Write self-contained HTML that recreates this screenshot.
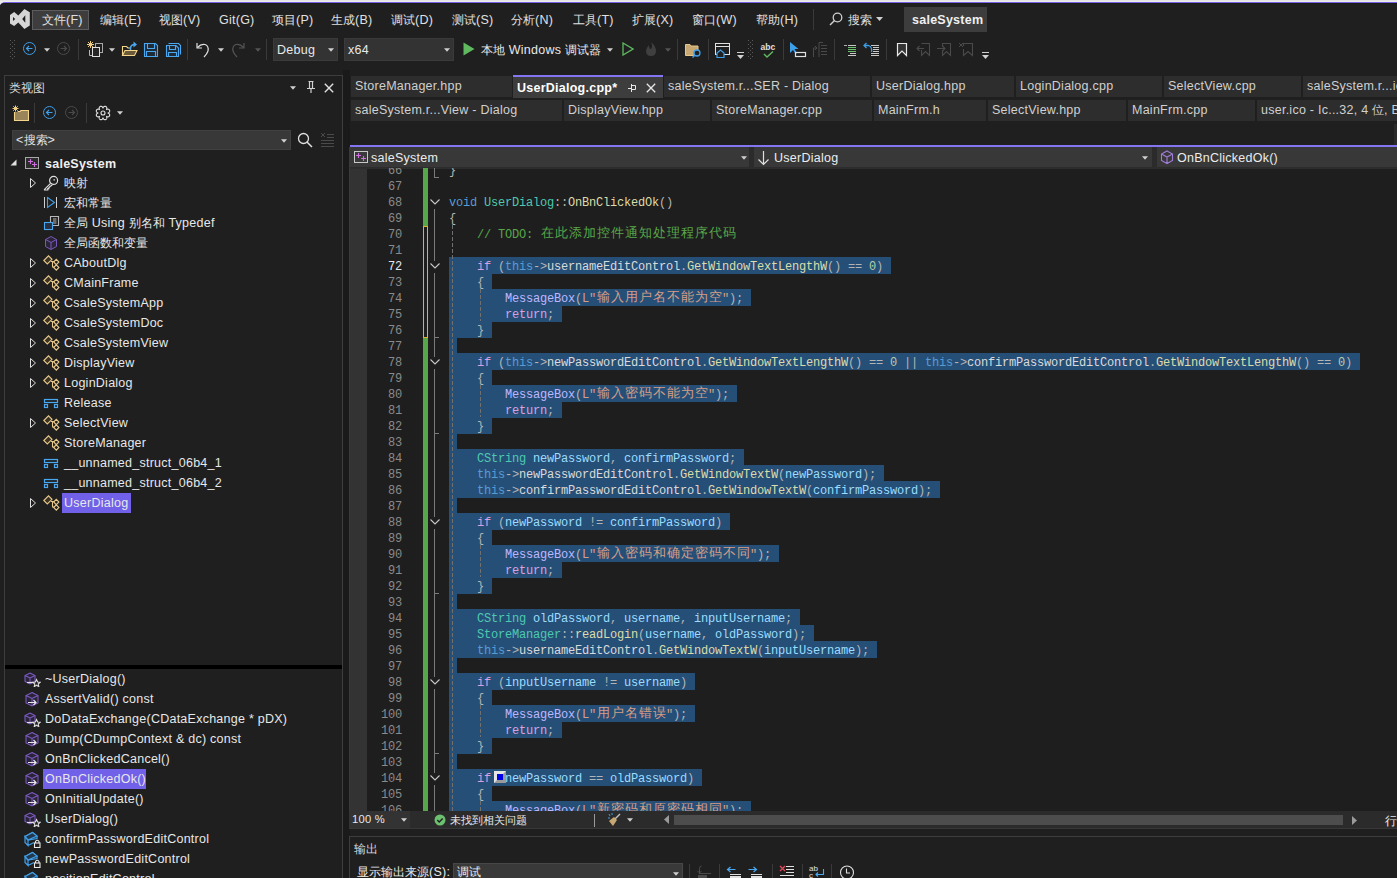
<!DOCTYPE html><html><head><meta charset="utf-8"><style>
*{margin:0;padding:0}
html,body{width:1397px;height:878px;overflow:hidden;background:#e9e9ec}
.r{position:absolute;display:block}
.t{position:absolute;white-space:pre;line-height:1;letter-spacing:0.25px}
.code{position:absolute;white-space:pre;font-family:"Liberation Mono",monospace;font-size:12px;letter-spacing:-0.2px;line-height:20px;height:20px}
.cjk{position:absolute;white-space:pre;font-family:"Liberation Sans",sans-serif;font-size:12.5px;line-height:16px;height:16px;width:14px;text-align:center}
</style></head><body><div class="r" style="left:0px;top:0px;width:1397px;height:3px;background:#ececea;"></div>
<div class="r" style="left:0px;top:0px;width:1397px;height:1px;background:#e6e6e6;"></div>
<div class="r" style="left:0px;top:2px;width:1397px;height:876px;background:#7462e6;border-top-left-radius:5px;"></div>
<div class="r" style="left:0px;top:3px;width:1397px;height:875px;background:#1c1b15;border-top-left-radius:4px;"></div>
<div class="r" style="left:0px;top:4px;width:1397px;height:874px;background:#1f1f1f;border-top-left-radius:3px;"></div>
<svg class="r" style="left:10px;top:9px;" width="20" height="20" viewBox="0 0 20 20"><path d="M0 6 L4.2 3 L8.3 6.5 L14.4 0 L19.8 3.3 V16.5 L14.4 20 L8.3 13.5 L4.2 17 L0 14.5 Z M3 8 L5.2 10 L3 12 Z M15.3 6.3 L12.2 10 L15.3 13.7 Z" fill="#d6d6d6" fill-rule="evenodd"/></svg>
<div class="r" style="left:32px;top:10px;width:57px;height:20px;background:#3d3d3d;box-sizing:border-box;border:1px solid #5c5c5c;"></div>
<div class="t" style="left:42px;top:14px;color:#e0e0e0;font-size:12.5px;font-weight:normal;font-family:'Liberation Sans', sans-serif;"><span style="font-size:12px;letter-spacing:0">文件</span>(F)</div>
<div class="t" style="left:100px;top:14px;color:#e0e0e0;font-size:12.5px;font-weight:normal;font-family:'Liberation Sans', sans-serif;"><span style="font-size:12px;letter-spacing:0">编辑</span>(E)</div>
<div class="t" style="left:159px;top:14px;color:#e0e0e0;font-size:12.5px;font-weight:normal;font-family:'Liberation Sans', sans-serif;"><span style="font-size:12px;letter-spacing:0">视图</span>(V)</div>
<div class="t" style="left:219px;top:14px;color:#e0e0e0;font-size:12.5px;font-weight:normal;font-family:'Liberation Sans', sans-serif;">Git(G)</div>
<div class="t" style="left:272px;top:14px;color:#e0e0e0;font-size:12.5px;font-weight:normal;font-family:'Liberation Sans', sans-serif;"><span style="font-size:12px;letter-spacing:0">项目</span>(P)</div>
<div class="t" style="left:331px;top:14px;color:#e0e0e0;font-size:12.5px;font-weight:normal;font-family:'Liberation Sans', sans-serif;"><span style="font-size:12px;letter-spacing:0">生成</span>(B)</div>
<div class="t" style="left:391px;top:14px;color:#e0e0e0;font-size:12.5px;font-weight:normal;font-family:'Liberation Sans', sans-serif;"><span style="font-size:12px;letter-spacing:0">调试</span>(D)</div>
<div class="t" style="left:452px;top:14px;color:#e0e0e0;font-size:12.5px;font-weight:normal;font-family:'Liberation Sans', sans-serif;"><span style="font-size:12px;letter-spacing:0">测试</span>(S)</div>
<div class="t" style="left:511px;top:14px;color:#e0e0e0;font-size:12.5px;font-weight:normal;font-family:'Liberation Sans', sans-serif;"><span style="font-size:12px;letter-spacing:0">分析</span>(N)</div>
<div class="t" style="left:573px;top:14px;color:#e0e0e0;font-size:12.5px;font-weight:normal;font-family:'Liberation Sans', sans-serif;"><span style="font-size:12px;letter-spacing:0">工具</span>(T)</div>
<div class="t" style="left:632px;top:14px;color:#e0e0e0;font-size:12.5px;font-weight:normal;font-family:'Liberation Sans', sans-serif;"><span style="font-size:12px;letter-spacing:0">扩展</span>(X)</div>
<div class="t" style="left:692px;top:14px;color:#e0e0e0;font-size:12.5px;font-weight:normal;font-family:'Liberation Sans', sans-serif;"><span style="font-size:12px;letter-spacing:0">窗口</span>(W)</div>
<div class="t" style="left:756px;top:14px;color:#e0e0e0;font-size:12.5px;font-weight:normal;font-family:'Liberation Sans', sans-serif;"><span style="font-size:12px;letter-spacing:0">帮助</span>(H)</div>
<div class="r" style="left:813px;top:9px;width:1px;height:21px;background:#3a3a3a;"></div>
<svg class="r" style="left:829px;top:12px;" width="14" height="14" viewBox="0 0 14 14"><circle cx="8.5" cy="5.5" r="4.3" fill="none" stroke="#d0d0d0" stroke-width="1.3"/><path d="M5.5 8.5 L1 13" stroke="#d0d0d0" stroke-width="1.5"/></svg>
<div class="t" style="left:848px;top:14px;color:#e0e0e0;font-size:12.5px;font-weight:normal;font-family:'Liberation Sans', sans-serif;"><span style="font-size:12px;letter-spacing:0">搜索</span></div>
<svg class="r" style="left:876px;top:17px;" width="7" height="4" viewBox="0 0 7 4"><path d="M0 0 H7 L3.5 4Z" fill="#d0d0d0"/></svg>
<div class="r" style="left:904px;top:7px;width:83px;height:25px;background:#3d3d3d;"></div>
<div class="t" style="left:912px;top:14px;color:#f0f0f0;font-size:12.5px;font-weight:bold;font-family:'Liberation Sans', sans-serif;">saleSystem</div>
<svg class="r" style="left:10px;top:40px;" width="6" height="20" viewBox="0 0 6 20"><rect x="0" y="0" width="1" height="1" fill="#5a5a5a"/><rect x="4" y="0" width="1" height="1" fill="#5a5a5a"/><rect x="2" y="2" width="1" height="1" fill="#5a5a5a"/><rect x="0" y="4" width="1" height="1" fill="#5a5a5a"/><rect x="4" y="4" width="1" height="1" fill="#5a5a5a"/><rect x="2" y="6" width="1" height="1" fill="#5a5a5a"/><rect x="0" y="8" width="1" height="1" fill="#5a5a5a"/><rect x="4" y="8" width="1" height="1" fill="#5a5a5a"/><rect x="2" y="10" width="1" height="1" fill="#5a5a5a"/><rect x="0" y="12" width="1" height="1" fill="#5a5a5a"/><rect x="4" y="12" width="1" height="1" fill="#5a5a5a"/><rect x="2" y="14" width="1" height="1" fill="#5a5a5a"/><rect x="0" y="16" width="1" height="1" fill="#5a5a5a"/><rect x="4" y="16" width="1" height="1" fill="#5a5a5a"/><rect x="2" y="18" width="1" height="1" fill="#5a5a5a"/></svg>
<svg class="r" style="left:23px;top:42px;" width="14" height="14" viewBox="0 0 14 14"><circle cx="6.5" cy="6.5" r="6" fill="none" stroke="#3f9ee8" stroke-width="1"/><path d="M9.5 6.5 H3.5 M6 4 L3.5 6.5 L6 9" fill="none" stroke="#3f9ee8" stroke-width="1.2"/></svg>
<svg class="r" style="left:44px;top:48px;" width="6" height="4" viewBox="0 0 6 4"><path d="M0 0.3 H6 L3 3.8Z" fill="#d0d0d0"/></svg>
<svg class="r" style="left:57px;top:42px;" width="14" height="14" viewBox="0 0 14 14"><circle cx="6.5" cy="6.5" r="6" fill="none" stroke="#4a4a4a" stroke-width="1"/><path d="M3.5 6.5 H9.5 M7 4 L9.5 6.5 L7 9" fill="none" stroke="#4a4a4a" stroke-width="1.2"/></svg>
<div class="r" style="left:78px;top:39px;width:1px;height:21px;background:#3a3a3a;"></div>
<svg class="r" style="left:86px;top:41px;" width="18" height="17" viewBox="0 0 18 17"><path d="M4.5 0 V7 M1 3.5 H8 M2 1 L7 6 M7 1 L2 6" stroke="#f0d080" stroke-width="1"/><rect x="9.5" y="2.5" width="7" height="9" fill="none" stroke="#a8a8a8"/><rect x="6.5" y="6.5" width="7" height="9" fill="#262626" stroke="#e0e0e0"/><path d="M3.5 9 V14.5 H6" fill="none" stroke="#b8b8b8"/></svg>
<svg class="r" style="left:109px;top:48px;" width="6" height="4" viewBox="0 0 6 4"><path d="M0 0.3 H6 L3 3.8Z" fill="#d0d0d0"/></svg>
<svg class="r" style="left:121px;top:41px;" width="18" height="17" viewBox="0 0 18 17"><path d="M1.5 14.5 V5.5 H5.5 L7 7 H9.5" fill="none" stroke="#f5d58a" stroke-width="1.1"/><path d="M1.5 14.5 L4 9.5 H16 L13.5 14.5 Z" fill="#6b5a3a" stroke="#f5d58a" stroke-width="1.1"/><path d="M9.5 9 V7.5 Q9.5 3.5 14 3.5" fill="none" stroke="#4aa8f0" stroke-width="1.5"/><path d="M12.5 0.5 L16 3.5 L12.5 6.5Z" fill="#4aa8f0"/></svg>
<svg class="r" style="left:143px;top:42px;" width="16" height="16" viewBox="0 0 16 16"><g fill="none" stroke="#4aa8f0" stroke-width="1.1"><path d="M1.5 1.5 H12.5 L14.5 3.5 V14.5 H1.5 Z" fill="#1e2a36"/><path d="M4.5 1.5 V6.5 H11.5 V1.5"/><path d="M3.5 14.5 V9.5 H12.5 V14.5"/></g></svg>
<svg class="r" style="left:165px;top:41px;" width="17" height="17" viewBox="0 0 17 17"><g fill="none" stroke="#4aa8f0" stroke-width="1.1"><path d="M3.5 2.5 H13.5 L15.5 4.5 V13.5"/><path d="M1.5 4.5 H11 L13.5 7 V15.5 H1.5 Z" fill="#1e2a36"/><path d="M4.5 4.5 V8.5 H10.5 V4.5"/><path d="M3.5 15.5 V11.5 H11.5 V15.5"/></g></svg>
<div class="r" style="left:187px;top:39px;width:1px;height:21px;background:#3a3a3a;"></div>
<svg class="r" style="left:195px;top:41px;" width="16" height="17" viewBox="0 0 16 17"><path d="M2 2 V7 H7" fill="none" stroke="#e0e0e0" stroke-width="1.2"/><path d="M2.5 6.5 Q6 2.5 10 3.5 Q14 5 13 10 Q12 13 9 16" fill="none" stroke="#e0e0e0" stroke-width="1.2"/></svg>
<svg class="r" style="left:218px;top:48px;" width="6" height="4" viewBox="0 0 6 4"><path d="M0 0.3 H6 L3 3.8Z" fill="#d0d0d0"/></svg>
<svg class="r" style="left:230px;top:41px;" width="16" height="17" viewBox="0 0 16 17"><path d="M14 2 V7 H9" fill="none" stroke="#555" stroke-width="1.2"/><path d="M13.5 6.5 Q10 2.5 6 3.5 Q2 5 3 10 Q4 13 7 16" fill="none" stroke="#555" stroke-width="1.2"/></svg>
<svg class="r" style="left:255px;top:48px;" width="6" height="4" viewBox="0 0 6 4"><path d="M0 0.3 H6 L3 3.8Z" fill="#555"/></svg>
<div class="r" style="left:266px;top:39px;width:1px;height:21px;background:#3a3a3a;"></div>
<div class="r" style="left:273px;top:38px;width:65px;height:23px;background:#333333;box-sizing:border-box;border:1px solid #3a3a3a;"></div>
<div class="t" style="left:277px;top:44px;color:#e8e8e8;font-size:12.5px;font-weight:normal;font-family:'Liberation Sans', sans-serif;">Debug</div>
<svg class="r" style="left:328px;top:48px;" width="6" height="4" viewBox="0 0 6 4"><path d="M0 0.3 H6 L3 3.8Z" fill="#d0d0d0"/></svg>
<div class="r" style="left:344px;top:38px;width:110px;height:23px;background:#333333;box-sizing:border-box;border:1px solid #3a3a3a;"></div>
<div class="t" style="left:348px;top:44px;color:#e8e8e8;font-size:12.5px;font-weight:normal;font-family:'Liberation Sans', sans-serif;">x64</div>
<svg class="r" style="left:444px;top:48px;" width="6" height="4" viewBox="0 0 6 4"><path d="M0 0.3 H6 L3 3.8Z" fill="#d0d0d0"/></svg>
<svg class="r" style="left:463px;top:42px;" width="12" height="14" viewBox="0 0 12 14"><path d="M0.5 0.5 L11.5 7 L0.5 13.5Z" fill="#5fba5f"/></svg>
<div class="t" style="left:481px;top:44px;color:#e8e8e8;font-size:12.5px;font-weight:normal;font-family:'Liberation Sans', sans-serif;"><span style="font-size:12px;letter-spacing:0">本地</span> Windows <span style="font-size:12px;letter-spacing:0">调试器</span></div>
<svg class="r" style="left:607px;top:48px;" width="6" height="4" viewBox="0 0 6 4"><path d="M0 0.3 H6 L3 3.8Z" fill="#d0d0d0"/></svg>
<svg class="r" style="left:622px;top:42px;" width="12" height="14" viewBox="0 0 12 14"><path d="M1 1 L11 7 L1 13Z" fill="none" stroke="#5fba5f" stroke-width="1.3"/></svg>
<svg class="r" style="left:644px;top:41px;" width="14" height="16" viewBox="0 0 14 16"><path d="M7 1 Q12 5 12 10 Q12 15 7 15 Q2 15 2 10 Q2 7 5 4 Q5 8 7 8 Q9 5 7 1Z" fill="#3f3f3f"/></svg>
<svg class="r" style="left:665px;top:48px;" width="6" height="4" viewBox="0 0 6 4"><path d="M0 0.3 H6 L3 3.8Z" fill="#555"/></svg>
<div class="r" style="left:677px;top:39px;width:1px;height:21px;background:#3a3a3a;"></div>
<svg class="r" style="left:684px;top:41px;" width="18" height="17" viewBox="0 0 18 17"><path d="M1.5 3.5 H6 L7 5 H14 V14.5 H1.5Z" fill="#c8a872" stroke="#e8c88a"/><circle cx="13" cy="12" r="3" fill="#1f1f1f" stroke="#3f9ee8" stroke-width="1.3"/><path d="M11 14 L8.5 16.5" stroke="#3f9ee8" stroke-width="1.5"/></svg>
<div class="r" style="left:708px;top:39px;width:1px;height:21px;background:#3a3a3a;"></div>
<svg class="r" style="left:714px;top:41px;" width="17" height="18" viewBox="0 0 17 18"><rect x="1.5" y="2.5" width="14" height="11" fill="none" stroke="#e0e0e0"/><path d="M1.5 5.5 H15.5" stroke="#e0e0e0"/><path d="M3 12 L6.5 9 L10 12 V16.5 H3Z" fill="#1f1f1f" stroke="#3f9ee8" stroke-width="1.2"/></svg>
<svg class="r" style="left:737px;top:52px;" width="7" height="7" viewBox="0 0 7 7"><path d="M0 0.5 H7" stroke="#d0d0d0"/><path d="M0 3 H7 L3.5 7Z" fill="#d0d0d0"/></svg>
<svg class="r" style="left:748px;top:40px;" width="6" height="20" viewBox="0 0 6 20"><rect x="0" y="0" width="1" height="1" fill="#5a5a5a"/><rect x="4" y="0" width="1" height="1" fill="#5a5a5a"/><rect x="2" y="2" width="1" height="1" fill="#5a5a5a"/><rect x="0" y="4" width="1" height="1" fill="#5a5a5a"/><rect x="4" y="4" width="1" height="1" fill="#5a5a5a"/><rect x="2" y="6" width="1" height="1" fill="#5a5a5a"/><rect x="0" y="8" width="1" height="1" fill="#5a5a5a"/><rect x="4" y="8" width="1" height="1" fill="#5a5a5a"/><rect x="2" y="10" width="1" height="1" fill="#5a5a5a"/><rect x="0" y="12" width="1" height="1" fill="#5a5a5a"/><rect x="4" y="12" width="1" height="1" fill="#5a5a5a"/><rect x="2" y="14" width="1" height="1" fill="#5a5a5a"/><rect x="0" y="16" width="1" height="1" fill="#5a5a5a"/><rect x="4" y="16" width="1" height="1" fill="#5a5a5a"/><rect x="2" y="18" width="1" height="1" fill="#5a5a5a"/></svg>
<svg class="r" style="left:760px;top:42px;" width="16" height="16" viewBox="0 0 16 16"><text x="0.5" y="8" font-family="Liberation Sans" font-size="8.5" font-weight="bold" fill="#e0e0e0">abc</text><path d="M4 12 L7 15 L13 9.5" fill="none" stroke="#5fba5f" stroke-width="1.4"/></svg>
<div class="r" style="left:783px;top:39px;width:1px;height:21px;background:#3a3a3a;"></div>
<svg class="r" style="left:789px;top:41px;" width="18" height="18" viewBox="0 0 18 18"><path d="M1 1 L1 12 L4 9 L6.5 13 L8 12 L5.5 8 L9.5 8Z" fill="#3f9ee8"/><rect x="6.5" y="11.5" width="10" height="4" fill="none" stroke="#e0e0e0" stroke-width="1.2"/></svg>
<svg class="r" style="left:812px;top:41px;" width="16" height="17" viewBox="0 0 16 17"><path d="M1.5 16 V7 H5 M3 5 L5 7 L3 9" fill="none" stroke="#4a4a4a"/><path d="M7 1.5 H11 M7 1.5 V16 M9 4.5 H15 M9 7.5 H15 M9 10.5 H15 M9 13.5 H15" stroke="#4a4a4a"/></svg>
<div class="r" style="left:834px;top:39px;width:1px;height:21px;background:#3a3a3a;"></div>
<svg class="r" style="left:842px;top:42px;" width="16" height="16" viewBox="0 0 16 16"><path d="M2 3.5 H5" stroke="#b0b0b0"/><path d="M6 3.5 H14 M8 11.5 H14 M6 13.5 H14" stroke="#c8c8c8"/><path d="M6 5.5 H14 M6 7.5 H14 M6 9.5 H14" stroke="#6cc070"/></svg>
<svg class="r" style="left:862px;top:42px;" width="18" height="16" viewBox="0 0 18 16"><path d="M9.5 10 Q10.5 5 6.5 3.5 H3" fill="none" stroke="#3f9ee8" stroke-width="1.3"/><path d="M4.5 1 L2 3.5 L4.5 6" fill="none" stroke="#3f9ee8" stroke-width="1.3"/><path d="M9 3.5 H17 M11 5.5 H17 M11 7.5 H17 M11 9.5 H17 M9 11.5 H17 M9 13.5 H17" stroke="#c8c8c8"/></svg>
<div class="r" style="left:886px;top:39px;width:1px;height:21px;background:#3a3a3a;"></div>
<svg class="r" style="left:896px;top:42px;" width="12" height="15" viewBox="0 0 12 15"><path d="M1.5 1.5 H10.5 V13.5 L6 9 L1.5 13.5Z" fill="#333" stroke="#e8e8e8" stroke-width="1.2"/></svg>
<svg class="r" style="left:916px;top:42px;" width="15" height="15" viewBox="0 0 15 15"><path d="M5.5 1.5 H13.5 V13.5 L9.5 9.5 L5.5 13.5 V8" fill="none" stroke="#4a4a4a" stroke-width="1.1"/><path d="M1 6.5 H8 M3.5 4 L1 6.5 L3.5 9" fill="none" stroke="#4a4a4a" stroke-width="1.1"/></svg>
<svg class="r" style="left:937px;top:42px;" width="15" height="15" viewBox="0 0 15 15"><path d="M5.5 5 V1.5 H13.5 V13.5 L9.5 9.5 L5.5 13.5 V8" fill="none" stroke="#4a4a4a" stroke-width="1.1"/><path d="M0 6.5 H8 M5.5 4 L8 6.5 L5.5 9" fill="none" stroke="#4a4a4a" stroke-width="1.1"/></svg>
<svg class="r" style="left:958px;top:42px;" width="16" height="15" viewBox="0 0 16 15"><path d="M5.5 4 V1.5 H14.5 V13.5 L10 9.5 L5.5 13.5 V7" fill="none" stroke="#4a4a4a" stroke-width="1.1"/><path d="M1 1 L5 5 M5 1 L1 5" stroke="#4a4a4a" stroke-width="1"/></svg>
<svg class="r" style="left:982px;top:52px;" width="7" height="7" viewBox="0 0 7 7"><path d="M0 0.5 H7" stroke="#d0d0d0"/><path d="M0 3 H7 L3.5 7Z" fill="#d0d0d0"/></svg>
<div class="r" style="left:4px;top:75px;width:339px;height:803px;background:#1f1f1f;box-sizing:border-box;border:1px solid #3d3d3d;border-bottom:none;"></div>
<div class="t" style="left:9px;top:81.5px;color:#d8d8d8;font-size:12.5px;font-weight:normal;font-family:'Liberation Sans', sans-serif;"><span style="font-size:12px;letter-spacing:0">类视图</span></div>
<svg class="r" style="left:290px;top:86px;" width="6" height="4" viewBox="0 0 6 4"><path d="M0 0.3 H6 L3 3.8Z" fill="#d0d0d0"/></svg>
<svg class="r" style="left:306px;top:80px;" width="10" height="14" viewBox="0 0 10 14"><path d="M2.5 1.5 H7.5 M3.5 1.5 V8 M6.5 1.5 V8 M1 8.5 H9 M5 8.5 V13" fill="none" stroke="#d0d0d0" stroke-width="1.2"/></svg>
<svg class="r" style="left:324px;top:83px;" width="10" height="10" viewBox="0 0 10 10"><path d="M0.8 0.8 L9.2 9.2 M9.2 0.8 L0.8 9.2" stroke="#e0e0e0" stroke-width="1.4"/></svg>
<svg class="r" style="left:11px;top:105px;" width="18" height="17" viewBox="0 0 18 17"><path d="M3.5 15.5 V6.5 H9 L10 5.5 H17.5 V15.5Z" fill="#9a845a" stroke="#f5d58a" stroke-width="1.1"/><path d="M4.5 0 V7 M1 3.5 H8 M2 1 L7 6 M7 1 L2 6" stroke="#1f1f1f" stroke-width="2.6"/><path d="M4.5 0.5 V6.5 M1.5 3.5 H7.5 M2.3 1.3 L6.7 5.7 M6.7 1.3 L2.3 5.7" stroke="#f0d080" stroke-width="1"/></svg>
<div class="r" style="left:34px;top:103px;width:1px;height:20px;background:#3a3a3a;"></div>
<svg class="r" style="left:43px;top:106px;" width="14" height="14" viewBox="0 0 14 14"><circle cx="6.5" cy="6.5" r="6" fill="none" stroke="#3f9ee8" stroke-width="1"/><path d="M9.5 6.5 H3.5 M6 4 L3.5 6.5 L6 9" fill="none" stroke="#3f9ee8" stroke-width="1.2"/></svg>
<svg class="r" style="left:65px;top:106px;" width="14" height="14" viewBox="0 0 14 14"><circle cx="6.5" cy="6.5" r="6" fill="none" stroke="#4a4a4a" stroke-width="1"/><path d="M3.5 6.5 H9.5 M7 4 L9.5 6.5 L7 9" fill="none" stroke="#4a4a4a" stroke-width="1.2"/></svg>
<div class="r" style="left:86px;top:103px;width:1px;height:20px;background:#3a3a3a;"></div>
<svg class="r" style="left:95px;top:105px;" width="16" height="16" viewBox="0 0 16 16"><path d="M14.56 10.72 L14.48 10.88 L14.38 11.04 L14.26 11.19 L14.13 11.33 L13.98 11.45 L13.81 11.56 L13.63 11.65 L13.43 11.73 L13.21 11.79 L12.98 11.83 L12.74 11.84 L12.48 11.82 L12.19 11.77 L11.86 11.66 L11.32 11.32 L11.66 11.86 L11.77 12.19 L11.82 12.48 L11.84 12.74 L11.83 12.98 L11.79 13.21 L11.73 13.43 L11.65 13.63 L11.56 13.81 L11.45 13.98 L11.33 14.13 L11.19 14.26 L11.04 14.38 L10.88 14.48 L10.72 14.56 L10.54 14.62 L10.36 14.66 L10.17 14.68 L9.98 14.69 L9.79 14.67 L9.59 14.63 L9.39 14.56 L9.20 14.48 L9.01 14.37 L8.82 14.23 L8.64 14.07 L8.46 13.87 L8.29 13.63 L8.14 13.32 L8.00 12.70 L7.86 13.32 L7.71 13.63 L7.54 13.87 L7.36 14.07 L7.18 14.23 L6.99 14.37 L6.80 14.48 L6.61 14.56 L6.41 14.63 L6.21 14.67 L6.02 14.69 L5.83 14.68 L5.64 14.66 L5.46 14.62 L5.28 14.56 L5.12 14.48 L4.96 14.38 L4.81 14.26 L4.67 14.13 L4.55 13.98 L4.44 13.81 L4.35 13.63 L4.27 13.43 L4.21 13.21 L4.17 12.98 L4.16 12.74 L4.18 12.48 L4.23 12.19 L4.34 11.86 L4.68 11.32 L4.14 11.66 L3.81 11.77 L3.52 11.82 L3.26 11.84 L3.02 11.83 L2.79 11.79 L2.57 11.73 L2.37 11.65 L2.19 11.56 L2.02 11.45 L1.87 11.33 L1.74 11.19 L1.62 11.04 L1.52 10.88 L1.44 10.72 L1.38 10.54 L1.34 10.36 L1.32 10.17 L1.31 9.98 L1.33 9.79 L1.37 9.59 L1.44 9.39 L1.52 9.20 L1.63 9.01 L1.77 8.82 L1.93 8.64 L2.13 8.46 L2.37 8.29 L2.68 8.14 L3.30 8.00 L2.68 7.86 L2.37 7.71 L2.13 7.54 L1.93 7.36 L1.77 7.18 L1.63 6.99 L1.52 6.80 L1.44 6.61 L1.37 6.41 L1.33 6.21 L1.31 6.02 L1.32 5.83 L1.34 5.64 L1.38 5.46 L1.44 5.28 L1.52 5.12 L1.62 4.96 L1.74 4.81 L1.87 4.67 L2.02 4.55 L2.19 4.44 L2.37 4.35 L2.57 4.27 L2.79 4.21 L3.02 4.17 L3.26 4.16 L3.52 4.18 L3.81 4.23 L4.14 4.34 L4.68 4.68 L4.34 4.14 L4.23 3.81 L4.18 3.52 L4.16 3.26 L4.17 3.02 L4.21 2.79 L4.27 2.57 L4.35 2.37 L4.44 2.19 L4.55 2.02 L4.67 1.87 L4.81 1.74 L4.96 1.62 L5.12 1.52 L5.28 1.44 L5.46 1.38 L5.64 1.34 L5.83 1.32 L6.02 1.31 L6.21 1.33 L6.41 1.37 L6.61 1.44 L6.80 1.52 L6.99 1.63 L7.18 1.77 L7.36 1.93 L7.54 2.13 L7.71 2.37 L7.86 2.68 L8.00 3.30 L8.14 2.68 L8.29 2.37 L8.46 2.13 L8.64 1.93 L8.82 1.77 L9.01 1.63 L9.20 1.52 L9.39 1.44 L9.59 1.37 L9.79 1.33 L9.98 1.31 L10.17 1.32 L10.36 1.34 L10.54 1.38 L10.72 1.44 L10.88 1.52 L11.04 1.62 L11.19 1.74 L11.33 1.87 L11.45 2.02 L11.56 2.19 L11.65 2.37 L11.73 2.57 L11.79 2.79 L11.83 3.02 L11.84 3.26 L11.82 3.52 L11.77 3.81 L11.66 4.14 L11.32 4.68 L11.86 4.34 L12.19 4.23 L12.48 4.18 L12.74 4.16 L12.98 4.17 L13.21 4.21 L13.43 4.27 L13.63 4.35 L13.81 4.44 L13.98 4.55 L14.13 4.67 L14.26 4.81 L14.38 4.96 L14.48 5.12 L14.56 5.28 L14.62 5.46 L14.66 5.64 L14.68 5.83 L14.69 6.02 L14.67 6.21 L14.63 6.41 L14.56 6.61 L14.48 6.80 L14.37 6.99 L14.23 7.18 L14.07 7.36 L13.87 7.54 L13.63 7.71 L13.32 7.86 L12.70 8.00 L13.32 8.14 L13.63 8.29 L13.87 8.46 L14.07 8.64 L14.23 8.82 L14.37 9.01 L14.48 9.20 L14.56 9.39 L14.63 9.59 L14.67 9.79 L14.69 9.98 L14.68 10.17 L14.66 10.36 L14.62 10.54Z" fill="none" stroke="#e0e0e0" stroke-width="1.1"/><circle cx="8" cy="8" r="2" fill="none" stroke="#e0e0e0" stroke-width="1.1"/></svg>
<svg class="r" style="left:117px;top:111px;" width="6" height="4" viewBox="0 0 6 4"><path d="M0 0.3 H6 L3 3.8Z" fill="#d0d0d0"/></svg>
<div class="r" style="left:12px;top:130px;width:279px;height:20px;background:#383838;box-sizing:border-box;border:1px solid #404040;"></div>
<div class="t" style="left:16px;top:133.5px;color:#e0e0e0;font-size:12.5px;font-weight:normal;font-family:'Liberation Sans', sans-serif;">&lt;<span style="font-size:12px;letter-spacing:0">搜索</span>&gt;</div>
<svg class="r" style="left:281px;top:139px;" width="6" height="4" viewBox="0 0 6 4"><path d="M0 0.3 H6 L3 3.8Z" fill="#d0d0d0"/></svg>
<svg class="r" style="left:297px;top:132px;" width="16" height="16" viewBox="0 0 16 16"><circle cx="6.5" cy="6.5" r="5" fill="none" stroke="#e0e0e0" stroke-width="1.3"/><path d="M10 10 L15 15" stroke="#e0e0e0" stroke-width="1.5"/></svg>
<svg class="r" style="left:320px;top:132px;" width="15" height="15" viewBox="0 0 15 15"><path d="M1 1 L5 5 M5 1 L1 5" stroke="#4a4a4a"/><path d="M7 2.5 H14 M7 5.5 H14 M1 8.5 H14 M1 11.5 H14 M1 14.5 H14" stroke="#4a4a4a"/></svg>
<div class="t" style="left:45px;top:158px;color:#f0f0f0;font-size:12.5px;font-weight:bold;font-family:'Liberation Sans', sans-serif;">saleSystem</div>
<svg class="r" style="left:10px;top:159px;" width="7" height="7" viewBox="0 0 7 7"><path d="M6.5 0.5 V6.5 H0.5Z" fill="#e0e0e0"/></svg>
<svg class="r" style="left:25px;top:157px;" width="15" height="13" viewBox="0 0 15 13"><rect x="0.5" y="0.5" width="13" height="11" fill="#2c2c2c" stroke="#a8a8a8"/><path d="M5.5 2 V7 M3 4.5 H8 M9.5 5 V10 M7 7.5 H12" stroke="#d070e0" stroke-width="1.1"/></svg>
<svg class="r" style="left:30px;top:178px;" width="6" height="10" viewBox="0 0 6 10"><path d="M0.5 0.5 L5.5 5 L0.5 9.5Z" fill="none" stroke="#e0e0e0"/></svg>
<svg class="r" style="left:43px;top:174px;" width="17" height="17" viewBox="0 0 17 17"><g fill="none" stroke="#e0e0e0" stroke-width="1.2"><path d="M7.3 9.6 L1.5 15.4 V16 H4.8 V14.7 H5.8 V13.7 L7.6 12 L9.3 11.2"/><circle cx="10.6" cy="6.4" r="4"/></g><circle cx="11.2" cy="5.8" r="0.9" fill="#b8b8b8"/></svg>
<div class="t" style="left:64px;top:177px;color:#e8e8e8;font-size:12.5px;font-weight:normal;font-family:'Liberation Sans', sans-serif;"><span style="font-size:12px;letter-spacing:0">映射</span></div>
<svg class="r" style="left:43px;top:194px;" width="17" height="17" viewBox="0 0 17 17"><path d="M1.5 3 V14" stroke="#d0d0d0" stroke-width="1"/><path d="M4.5 3.5 L11.5 8.5 L4.5 13.5Z" fill="none" stroke="#3f9ee8" stroke-width="1.1"/><path d="M13.5 3 V14" stroke="#d0d0d0" stroke-width="1"/></svg>
<div class="t" style="left:64px;top:197px;color:#e8e8e8;font-size:12.5px;font-weight:normal;font-family:'Liberation Sans', sans-serif;"><span style="font-size:12px;letter-spacing:0">宏和常量</span></div>
<svg class="r" style="left:43px;top:214px;" width="17" height="17" viewBox="0 0 17 17"><path d="M7.5 8 V2.5 H15.5 V11.5 H10" fill="none" stroke="#b8b8b8" stroke-width="1.1"/><path d="M10 5 H13.5 M10 7 H13.5 M10 9 H13.5" stroke="#b8b8b8"/><rect x="1.5" y="8.5" width="8" height="7" fill="#263240" stroke="#4aa8f0" stroke-width="1.1"/></svg>
<div class="t" style="left:64px;top:217px;color:#e8e8e8;font-size:12.5px;font-weight:normal;font-family:'Liberation Sans', sans-serif;"><span style="font-size:12px;letter-spacing:0">全局</span> Using <span style="font-size:12px;letter-spacing:0">别名和</span> Typedef</div>
<svg class="r" style="left:43px;top:234px;" width="17" height="17" viewBox="0 0 17 17"><g fill="none" stroke="#7a58b8" stroke-width="1"><path d="M8 2.5 L13.5 5.5 V12.5 L8 15.5 L2.5 12.5 V5.5Z" fill="#2a2438"/><path d="M2.5 5.5 L8 8.5 L13.5 5.5 M8 8.5 V15.5"/></g></svg>
<div class="t" style="left:64px;top:237px;color:#e8e8e8;font-size:12.5px;font-weight:normal;font-family:'Liberation Sans', sans-serif;"><span style="font-size:12px;letter-spacing:0">全局函数和变量</span></div>
<svg class="r" style="left:30px;top:258px;" width="6" height="10" viewBox="0 0 6 10"><path d="M0.5 0.5 L5.5 5 L0.5 9.5Z" fill="none" stroke="#e0e0e0"/></svg>
<svg class="r" style="left:43px;top:254px;" width="17" height="17" viewBox="0 0 17 17"><g stroke="#e8c88a" stroke-width="1.1"><path d="M0.8 6.5 L5.5 1.8 L9 5.3 L4.3 10Z" fill="#3a3322"/><path d="M8 7.5 H11.5 M9.5 7.5 V13 H11" fill="none"/><path d="M10.7 8 L13.3 5.4 L15.9 8 L13.3 10.6Z" fill="#1f1f1f"/><path d="M10.7 13.5 L13.3 10.9 L15.9 13.5 L13.3 16.1Z" fill="#1f1f1f"/></g></svg>
<div class="t" style="left:64px;top:257px;color:#e8e8e8;font-size:12.5px;font-weight:normal;font-family:'Liberation Sans', sans-serif;">CAboutDlg</div>
<svg class="r" style="left:30px;top:278px;" width="6" height="10" viewBox="0 0 6 10"><path d="M0.5 0.5 L5.5 5 L0.5 9.5Z" fill="none" stroke="#e0e0e0"/></svg>
<svg class="r" style="left:43px;top:274px;" width="17" height="17" viewBox="0 0 17 17"><g stroke="#e8c88a" stroke-width="1.1"><path d="M0.8 6.5 L5.5 1.8 L9 5.3 L4.3 10Z" fill="#3a3322"/><path d="M8 7.5 H11.5 M9.5 7.5 V13 H11" fill="none"/><path d="M10.7 8 L13.3 5.4 L15.9 8 L13.3 10.6Z" fill="#1f1f1f"/><path d="M10.7 13.5 L13.3 10.9 L15.9 13.5 L13.3 16.1Z" fill="#1f1f1f"/></g></svg>
<div class="t" style="left:64px;top:277px;color:#e8e8e8;font-size:12.5px;font-weight:normal;font-family:'Liberation Sans', sans-serif;">CMainFrame</div>
<svg class="r" style="left:30px;top:298px;" width="6" height="10" viewBox="0 0 6 10"><path d="M0.5 0.5 L5.5 5 L0.5 9.5Z" fill="none" stroke="#e0e0e0"/></svg>
<svg class="r" style="left:43px;top:294px;" width="17" height="17" viewBox="0 0 17 17"><g stroke="#e8c88a" stroke-width="1.1"><path d="M0.8 6.5 L5.5 1.8 L9 5.3 L4.3 10Z" fill="#3a3322"/><path d="M8 7.5 H11.5 M9.5 7.5 V13 H11" fill="none"/><path d="M10.7 8 L13.3 5.4 L15.9 8 L13.3 10.6Z" fill="#1f1f1f"/><path d="M10.7 13.5 L13.3 10.9 L15.9 13.5 L13.3 16.1Z" fill="#1f1f1f"/></g></svg>
<div class="t" style="left:64px;top:297px;color:#e8e8e8;font-size:12.5px;font-weight:normal;font-family:'Liberation Sans', sans-serif;">CsaleSystemApp</div>
<svg class="r" style="left:30px;top:318px;" width="6" height="10" viewBox="0 0 6 10"><path d="M0.5 0.5 L5.5 5 L0.5 9.5Z" fill="none" stroke="#e0e0e0"/></svg>
<svg class="r" style="left:43px;top:314px;" width="17" height="17" viewBox="0 0 17 17"><g stroke="#e8c88a" stroke-width="1.1"><path d="M0.8 6.5 L5.5 1.8 L9 5.3 L4.3 10Z" fill="#3a3322"/><path d="M8 7.5 H11.5 M9.5 7.5 V13 H11" fill="none"/><path d="M10.7 8 L13.3 5.4 L15.9 8 L13.3 10.6Z" fill="#1f1f1f"/><path d="M10.7 13.5 L13.3 10.9 L15.9 13.5 L13.3 16.1Z" fill="#1f1f1f"/></g></svg>
<div class="t" style="left:64px;top:317px;color:#e8e8e8;font-size:12.5px;font-weight:normal;font-family:'Liberation Sans', sans-serif;">CsaleSystemDoc</div>
<svg class="r" style="left:30px;top:338px;" width="6" height="10" viewBox="0 0 6 10"><path d="M0.5 0.5 L5.5 5 L0.5 9.5Z" fill="none" stroke="#e0e0e0"/></svg>
<svg class="r" style="left:43px;top:334px;" width="17" height="17" viewBox="0 0 17 17"><g stroke="#e8c88a" stroke-width="1.1"><path d="M0.8 6.5 L5.5 1.8 L9 5.3 L4.3 10Z" fill="#3a3322"/><path d="M8 7.5 H11.5 M9.5 7.5 V13 H11" fill="none"/><path d="M10.7 8 L13.3 5.4 L15.9 8 L13.3 10.6Z" fill="#1f1f1f"/><path d="M10.7 13.5 L13.3 10.9 L15.9 13.5 L13.3 16.1Z" fill="#1f1f1f"/></g></svg>
<div class="t" style="left:64px;top:337px;color:#e8e8e8;font-size:12.5px;font-weight:normal;font-family:'Liberation Sans', sans-serif;">CsaleSystemView</div>
<svg class="r" style="left:30px;top:358px;" width="6" height="10" viewBox="0 0 6 10"><path d="M0.5 0.5 L5.5 5 L0.5 9.5Z" fill="none" stroke="#e0e0e0"/></svg>
<svg class="r" style="left:43px;top:354px;" width="17" height="17" viewBox="0 0 17 17"><g stroke="#e8c88a" stroke-width="1.1"><path d="M0.8 6.5 L5.5 1.8 L9 5.3 L4.3 10Z" fill="#3a3322"/><path d="M8 7.5 H11.5 M9.5 7.5 V13 H11" fill="none"/><path d="M10.7 8 L13.3 5.4 L15.9 8 L13.3 10.6Z" fill="#1f1f1f"/><path d="M10.7 13.5 L13.3 10.9 L15.9 13.5 L13.3 16.1Z" fill="#1f1f1f"/></g></svg>
<div class="t" style="left:64px;top:357px;color:#e8e8e8;font-size:12.5px;font-weight:normal;font-family:'Liberation Sans', sans-serif;">DisplayView</div>
<svg class="r" style="left:30px;top:378px;" width="6" height="10" viewBox="0 0 6 10"><path d="M0.5 0.5 L5.5 5 L0.5 9.5Z" fill="none" stroke="#e0e0e0"/></svg>
<svg class="r" style="left:43px;top:374px;" width="17" height="17" viewBox="0 0 17 17"><g stroke="#e8c88a" stroke-width="1.1"><path d="M0.8 6.5 L5.5 1.8 L9 5.3 L4.3 10Z" fill="#3a3322"/><path d="M8 7.5 H11.5 M9.5 7.5 V13 H11" fill="none"/><path d="M10.7 8 L13.3 5.4 L15.9 8 L13.3 10.6Z" fill="#1f1f1f"/><path d="M10.7 13.5 L13.3 10.9 L15.9 13.5 L13.3 16.1Z" fill="#1f1f1f"/></g></svg>
<div class="t" style="left:64px;top:377px;color:#e8e8e8;font-size:12.5px;font-weight:normal;font-family:'Liberation Sans', sans-serif;">LoginDialog</div>
<svg class="r" style="left:43px;top:394px;" width="17" height="17" viewBox="0 0 17 17"><g fill="none" stroke="#4aa8f0" stroke-width="1.2"><rect x="1.5" y="5.5" width="13" height="3"/><rect x="1.5" y="10.5" width="3" height="3"/><rect x="11.5" y="10.5" width="3" height="3"/></g></svg>
<div class="t" style="left:64px;top:397px;color:#e8e8e8;font-size:12.5px;font-weight:normal;font-family:'Liberation Sans', sans-serif;">Release</div>
<svg class="r" style="left:30px;top:418px;" width="6" height="10" viewBox="0 0 6 10"><path d="M0.5 0.5 L5.5 5 L0.5 9.5Z" fill="none" stroke="#e0e0e0"/></svg>
<svg class="r" style="left:43px;top:414px;" width="17" height="17" viewBox="0 0 17 17"><g stroke="#e8c88a" stroke-width="1.1"><path d="M0.8 6.5 L5.5 1.8 L9 5.3 L4.3 10Z" fill="#3a3322"/><path d="M8 7.5 H11.5 M9.5 7.5 V13 H11" fill="none"/><path d="M10.7 8 L13.3 5.4 L15.9 8 L13.3 10.6Z" fill="#1f1f1f"/><path d="M10.7 13.5 L13.3 10.9 L15.9 13.5 L13.3 16.1Z" fill="#1f1f1f"/></g></svg>
<div class="t" style="left:64px;top:417px;color:#e8e8e8;font-size:12.5px;font-weight:normal;font-family:'Liberation Sans', sans-serif;">SelectView</div>
<svg class="r" style="left:43px;top:434px;" width="17" height="17" viewBox="0 0 17 17"><g stroke="#e8c88a" stroke-width="1.1"><path d="M0.8 6.5 L5.5 1.8 L9 5.3 L4.3 10Z" fill="#3a3322"/><path d="M8 7.5 H11.5 M9.5 7.5 V13 H11" fill="none"/><path d="M10.7 8 L13.3 5.4 L15.9 8 L13.3 10.6Z" fill="#1f1f1f"/><path d="M10.7 13.5 L13.3 10.9 L15.9 13.5 L13.3 16.1Z" fill="#1f1f1f"/></g></svg>
<div class="t" style="left:64px;top:437px;color:#e8e8e8;font-size:12.5px;font-weight:normal;font-family:'Liberation Sans', sans-serif;">StoreManager</div>
<svg class="r" style="left:43px;top:454px;" width="17" height="17" viewBox="0 0 17 17"><g fill="none" stroke="#4aa8f0" stroke-width="1.2"><rect x="1.5" y="5.5" width="13" height="3"/><rect x="1.5" y="10.5" width="3" height="3"/><rect x="11.5" y="10.5" width="3" height="3"/></g></svg>
<div class="t" style="left:64px;top:457px;color:#e8e8e8;font-size:12.5px;font-weight:normal;font-family:'Liberation Sans', sans-serif;">__unnamed_struct_06b4_1</div>
<svg class="r" style="left:43px;top:474px;" width="17" height="17" viewBox="0 0 17 17"><g fill="none" stroke="#4aa8f0" stroke-width="1.2"><rect x="1.5" y="5.5" width="13" height="3"/><rect x="1.5" y="10.5" width="3" height="3"/><rect x="11.5" y="10.5" width="3" height="3"/></g></svg>
<div class="t" style="left:64px;top:477px;color:#e8e8e8;font-size:12.5px;font-weight:normal;font-family:'Liberation Sans', sans-serif;">__unnamed_struct_06b4_2</div>
<svg class="r" style="left:30px;top:498px;" width="6" height="10" viewBox="0 0 6 10"><path d="M0.5 0.5 L5.5 5 L0.5 9.5Z" fill="none" stroke="#e0e0e0"/></svg>
<svg class="r" style="left:43px;top:494px;" width="17" height="17" viewBox="0 0 17 17"><g stroke="#e8c88a" stroke-width="1.1"><path d="M0.8 6.5 L5.5 1.8 L9 5.3 L4.3 10Z" fill="#3a3322"/><path d="M8 7.5 H11.5 M9.5 7.5 V13 H11" fill="none"/><path d="M10.7 8 L13.3 5.4 L15.9 8 L13.3 10.6Z" fill="#1f1f1f"/><path d="M10.7 13.5 L13.3 10.9 L15.9 13.5 L13.3 16.1Z" fill="#1f1f1f"/></g></svg>
<div class="r" style="left:62px;top:493px;width:69px;height:20px;background:#7160e8;"></div>
<div class="t" style="left:64px;top:497px;color:#e8e8e8;font-size:12.5px;font-weight:normal;font-family:'Liberation Sans', sans-serif;">UserDialog</div>
<div class="r" style="left:5px;top:665px;width:337px;height:4px;background:#000000;"></div>
<svg class="r" style="left:24px;top:670px;" width="17" height="17" viewBox="0 0 17 17"><g fill="none" stroke="#7e5cc4" stroke-width="1.05"><path d="M6 3 L11 5.5 V11.5 L6 14 L1 11.5 V5.5Z" fill="#2a2438"/><path d="M1 5.5 L6 8 L11 5.5 M6 8 V14"/></g><path d="M3 12.5 H9" stroke="#e0e0e0" stroke-width="1.2"/><path d="M12.5 9.5 L13.6 12 L16.2 12.2 L14.2 14 L14.8 16.6 L12.5 15.2 L10.2 16.6 L10.8 14 L8.8 12.2 L11.4 12Z" fill="#1f1f1f" stroke="#e0e0e0" stroke-width="1.1"/></svg>
<div class="t" style="left:45px;top:673px;color:#e8e8e8;font-size:12.5px;font-weight:normal;font-family:'Liberation Sans', sans-serif;">~UserDialog()</div>
<svg class="r" style="left:24px;top:690px;" width="17" height="17" viewBox="0 0 17 17"><g fill="none" stroke="#7e5cc4" stroke-width="1.05"><path d="M8 2.5 L14 5.5 V13 L8 16 L2 13 V5.5Z" fill="#2a2438"/><path d="M2 5.5 L8 8.5 L14 5.5 M8 8.5 V16"/></g><path d="M4 12.5 H12 M9.5 10 L12 12.5 L9.5 15" fill="none" stroke="#e8e8e8" stroke-width="1.2"/></svg>
<div class="t" style="left:45px;top:693px;color:#e8e8e8;font-size:12.5px;font-weight:normal;font-family:'Liberation Sans', sans-serif;">AssertValid() const</div>
<svg class="r" style="left:24px;top:710px;" width="17" height="17" viewBox="0 0 17 17"><g fill="none" stroke="#7e5cc4" stroke-width="1.05"><path d="M6 3 L11 5.5 V11.5 L6 14 L1 11.5 V5.5Z" fill="#2a2438"/><path d="M1 5.5 L6 8 L11 5.5 M6 8 V14"/></g><path d="M3 12.5 H9" stroke="#e0e0e0" stroke-width="1.2"/><path d="M12.5 9.5 L13.6 12 L16.2 12.2 L14.2 14 L14.8 16.6 L12.5 15.2 L10.2 16.6 L10.8 14 L8.8 12.2 L11.4 12Z" fill="#1f1f1f" stroke="#e0e0e0" stroke-width="1.1"/></svg>
<div class="t" style="left:45px;top:713px;color:#e8e8e8;font-size:12.5px;font-weight:normal;font-family:'Liberation Sans', sans-serif;">DoDataExchange(CDataExchange * pDX)</div>
<svg class="r" style="left:24px;top:730px;" width="17" height="17" viewBox="0 0 17 17"><g fill="none" stroke="#7e5cc4" stroke-width="1.05"><path d="M8 2.5 L14 5.5 V13 L8 16 L2 13 V5.5Z" fill="#2a2438"/><path d="M2 5.5 L8 8.5 L14 5.5 M8 8.5 V16"/></g><path d="M4 12.5 H12 M9.5 10 L12 12.5 L9.5 15" fill="none" stroke="#e8e8e8" stroke-width="1.2"/></svg>
<div class="t" style="left:45px;top:733px;color:#e8e8e8;font-size:12.5px;font-weight:normal;font-family:'Liberation Sans', sans-serif;">Dump(CDumpContext &amp; dc) const</div>
<svg class="r" style="left:24px;top:750px;" width="17" height="17" viewBox="0 0 17 17"><g fill="none" stroke="#7e5cc4" stroke-width="1.05"><path d="M8 2.5 L14 5.5 V13 L8 16 L2 13 V5.5Z" fill="#2a2438"/><path d="M2 5.5 L8 8.5 L14 5.5 M8 8.5 V16"/></g><path d="M4 12.5 H12 M9.5 10 L12 12.5 L9.5 15" fill="none" stroke="#e8e8e8" stroke-width="1.2"/></svg>
<div class="t" style="left:45px;top:753px;color:#e8e8e8;font-size:12.5px;font-weight:normal;font-family:'Liberation Sans', sans-serif;">OnBnClickedCancel()</div>
<svg class="r" style="left:24px;top:770px;" width="17" height="17" viewBox="0 0 17 17"><g fill="none" stroke="#7e5cc4" stroke-width="1.05"><path d="M8 2.5 L14 5.5 V13 L8 16 L2 13 V5.5Z" fill="#2a2438"/><path d="M2 5.5 L8 8.5 L14 5.5 M8 8.5 V16"/></g><path d="M4 12.5 H12 M9.5 10 L12 12.5 L9.5 15" fill="none" stroke="#e8e8e8" stroke-width="1.2"/></svg>
<div class="r" style="left:43px;top:769px;width:103px;height:20px;background:#7160e8;"></div>
<div class="t" style="left:45px;top:773px;color:#e8e8e8;font-size:12.5px;font-weight:normal;font-family:'Liberation Sans', sans-serif;">OnBnClickedOk()</div>
<svg class="r" style="left:24px;top:790px;" width="17" height="17" viewBox="0 0 17 17"><g fill="none" stroke="#7e5cc4" stroke-width="1.05"><path d="M8 2.5 L14 5.5 V13 L8 16 L2 13 V5.5Z" fill="#2a2438"/><path d="M2 5.5 L8 8.5 L14 5.5 M8 8.5 V16"/></g><path d="M4 12.5 H12 M9.5 10 L12 12.5 L9.5 15" fill="none" stroke="#e8e8e8" stroke-width="1.2"/></svg>
<div class="t" style="left:45px;top:793px;color:#e8e8e8;font-size:12.5px;font-weight:normal;font-family:'Liberation Sans', sans-serif;">OnInitialUpdate()</div>
<svg class="r" style="left:24px;top:810px;" width="17" height="17" viewBox="0 0 17 17"><g fill="none" stroke="#7e5cc4" stroke-width="1.05"><path d="M6 3 L11 5.5 V11.5 L6 14 L1 11.5 V5.5Z" fill="#2a2438"/><path d="M1 5.5 L6 8 L11 5.5 M6 8 V14"/></g><path d="M3 12.5 H9" stroke="#e0e0e0" stroke-width="1.2"/><path d="M12.5 9.5 L13.6 12 L16.2 12.2 L14.2 14 L14.8 16.6 L12.5 15.2 L10.2 16.6 L10.8 14 L8.8 12.2 L11.4 12Z" fill="#1f1f1f" stroke="#e0e0e0" stroke-width="1.1"/></svg>
<div class="t" style="left:45px;top:813px;color:#e8e8e8;font-size:12.5px;font-weight:normal;font-family:'Liberation Sans', sans-serif;">UserDialog()</div>
<svg class="r" style="left:24px;top:831px;" width="17" height="17" viewBox="0 0 17 17"><g fill="none" stroke="#3f9ee8" stroke-width="1.2"><path d="M1 5.5 L8.5 1.5 L13 5 V7.5 L4 9 L1 5.5 V11.5 L4 14.5 V9 M4 14.5 L10 11.5" fill="#1e2a36"/><path d="M1 5.5 L8.5 1.5 L13 5 L4 9Z" fill="#24384c"/></g><rect x="10.5" y="12" width="5.5" height="4.5" fill="#1f1f1f" stroke="#e8e8e8" stroke-width="1.1"/><path d="M11.5 12 V10.5 Q13.25 8 15 10.5 V12" fill="none" stroke="#e8e8e8" stroke-width="1.1"/></svg>
<div class="t" style="left:45px;top:833px;color:#e8e8e8;font-size:12.5px;font-weight:normal;font-family:'Liberation Sans', sans-serif;">confirmPasswordEditControl</div>
<svg class="r" style="left:24px;top:851px;" width="17" height="17" viewBox="0 0 17 17"><g fill="none" stroke="#3f9ee8" stroke-width="1.2"><path d="M1 5.5 L8.5 1.5 L13 5 V7.5 L4 9 L1 5.5 V11.5 L4 14.5 V9 M4 14.5 L10 11.5" fill="#1e2a36"/><path d="M1 5.5 L8.5 1.5 L13 5 L4 9Z" fill="#24384c"/></g><rect x="10.5" y="12" width="5.5" height="4.5" fill="#1f1f1f" stroke="#e8e8e8" stroke-width="1.1"/><path d="M11.5 12 V10.5 Q13.25 8 15 10.5 V12" fill="none" stroke="#e8e8e8" stroke-width="1.1"/></svg>
<div class="t" style="left:45px;top:853px;color:#e8e8e8;font-size:12.5px;font-weight:normal;font-family:'Liberation Sans', sans-serif;">newPasswordEditControl</div>
<svg class="r" style="left:24px;top:871px;" width="17" height="17" viewBox="0 0 17 17"><g fill="none" stroke="#3f9ee8" stroke-width="1.2"><path d="M1 5.5 L8.5 1.5 L13 5 V7.5 L4 9 L1 5.5 V11.5 L4 14.5 V9 M4 14.5 L10 11.5" fill="#1e2a36"/><path d="M1 5.5 L8.5 1.5 L13 5 L4 9Z" fill="#24384c"/></g><rect x="10.5" y="12" width="5.5" height="4.5" fill="#1f1f1f" stroke="#e8e8e8" stroke-width="1.1"/><path d="M11.5 12 V10.5 Q13.25 8 15 10.5 V12" fill="none" stroke="#e8e8e8" stroke-width="1.1"/></svg>
<div class="t" style="left:45px;top:873px;color:#e8e8e8;font-size:12.5px;font-weight:normal;font-family:'Liberation Sans', sans-serif;">positionEditControl</div>
<div class="r" style="left:351px;top:76px;width:161px;height:21px;background:#2d2d2d;overflow:hidden;"></div>
<div class="t" style="left:355px;top:80px;color:#d0d0d0;font-size:12.5px;font-weight:normal;font-family:'Liberation Sans', sans-serif;">StoreManager.hpp</div>
<div class="r" style="left:664px;top:76px;width:206px;height:21px;background:#2d2d2d;overflow:hidden;"></div>
<div class="t" style="left:668px;top:80px;color:#d0d0d0;font-size:12.5px;font-weight:normal;font-family:'Liberation Sans', sans-serif;">saleSystem.r...SER - Dialog</div>
<div class="r" style="left:872px;top:76px;width:142px;height:21px;background:#2d2d2d;overflow:hidden;"></div>
<div class="t" style="left:876px;top:80px;color:#d0d0d0;font-size:12.5px;font-weight:normal;font-family:'Liberation Sans', sans-serif;">UserDialog.hpp</div>
<div class="r" style="left:1016px;top:76px;width:146px;height:21px;background:#2d2d2d;overflow:hidden;"></div>
<div class="t" style="left:1020px;top:80px;color:#d0d0d0;font-size:12.5px;font-weight:normal;font-family:'Liberation Sans', sans-serif;">LoginDialog.cpp</div>
<div class="r" style="left:1164px;top:76px;width:137px;height:21px;background:#2d2d2d;overflow:hidden;"></div>
<div class="t" style="left:1168px;top:80px;color:#d0d0d0;font-size:12.5px;font-weight:normal;font-family:'Liberation Sans', sans-serif;">SelectView.cpp</div>
<div class="r" style="left:1303px;top:76px;width:94px;height:21px;background:#2d2d2d;overflow:hidden;"></div>
<div class="t" style="left:1307px;top:80px;color:#d0d0d0;font-size:12.5px;font-weight:normal;font-family:'Liberation Sans', sans-serif;">saleSystem.r...ie</div>
<div class="r" style="left:513px;top:75px;width:150px;height:23px;background:#3d3d3d;"></div>
<div class="r" style="left:513px;top:75px;width:150px;height:2px;background:#8476f2;"></div>
<div class="t" style="left:517px;top:82px;color:#ffffff;font-size:12.5px;font-weight:bold;font-family:'Liberation Sans', sans-serif;">UserDialog.cpp*</div>
<svg class="r" style="left:628px;top:84px;" width="9" height="8" viewBox="0 0 9 8"><path d="M0 4.5 H3.5 M3.5 0 V8 M3.5 1.5 H7.5 V5.5 H3.5" fill="none" stroke="#e8e8e8" stroke-width="1"/></svg>
<svg class="r" style="left:646px;top:83px;" width="10" height="10" viewBox="0 0 10 10"><path d="M0.8 0.8 L9.2 9.2 M9.2 0.8 L0.8 9.2" stroke="#e8e8e8" stroke-width="1.3"/></svg>
<div class="r" style="left:351px;top:100px;width:211px;height:21px;background:#2d2d2d;"></div>
<div class="t" style="left:355px;top:104px;color:#d0d0d0;font-size:12.5px;font-weight:normal;font-family:'Liberation Sans', sans-serif;">saleSystem.r...View - Dialog</div>
<div class="r" style="left:564px;top:100px;width:146px;height:21px;background:#2d2d2d;"></div>
<div class="t" style="left:568px;top:104px;color:#d0d0d0;font-size:12.5px;font-weight:normal;font-family:'Liberation Sans', sans-serif;">DisplayView.hpp</div>
<div class="r" style="left:712px;top:100px;width:160px;height:21px;background:#2d2d2d;"></div>
<div class="t" style="left:716px;top:104px;color:#d0d0d0;font-size:12.5px;font-weight:normal;font-family:'Liberation Sans', sans-serif;">StoreManager.cpp</div>
<div class="r" style="left:874px;top:100px;width:112px;height:21px;background:#2d2d2d;"></div>
<div class="t" style="left:878px;top:104px;color:#d0d0d0;font-size:12.5px;font-weight:normal;font-family:'Liberation Sans', sans-serif;">MainFrm.h</div>
<div class="r" style="left:988px;top:100px;width:138px;height:21px;background:#2d2d2d;"></div>
<div class="t" style="left:992px;top:104px;color:#d0d0d0;font-size:12.5px;font-weight:normal;font-family:'Liberation Sans', sans-serif;">SelectView.hpp</div>
<div class="r" style="left:1128px;top:100px;width:127px;height:21px;background:#2d2d2d;"></div>
<div class="t" style="left:1132px;top:104px;color:#d0d0d0;font-size:12.5px;font-weight:normal;font-family:'Liberation Sans', sans-serif;">MainFrm.cpp</div>
<div class="r" style="left:1257px;top:100px;width:140px;height:21px;background:#2d2d2d;"></div>
<div class="t" style="left:1261px;top:104px;color:#d0d0d0;font-size:12.5px;font-weight:normal;font-family:'Liberation Sans', sans-serif;">user.ico - Ic...32, 4 <span style="font-size:12px;letter-spacing:0">位</span>, BMP</div>
<div class="r" style="left:350px;top:145px;width:1047px;height:2px;background:#8476f2;"></div>
<div class="r" style="left:349px;top:147px;width:1048px;height:20px;background:#383838;"></div>
<div class="r" style="left:349px;top:167px;width:1048px;height:1px;background:#2c2c2c;"></div>
<div class="r" style="left:749px;top:147px;width:5px;height:20px;background:#2b2b2b;"></div>
<div class="r" style="left:1152px;top:147px;width:5px;height:20px;background:#2b2b2b;"></div>
<svg class="r" style="left:354px;top:151px;" width="15" height="13" viewBox="0 0 15 13"><rect x="0.5" y="0.5" width="13" height="11" fill="#3a3a3a" stroke="#c8c8c8"/><path d="M4.5 2 V7 M2 4.5 H7 M9.5 5 V10 M7 7.5 H12" stroke="#d070e0" stroke-width="1.1"/></svg>
<div class="t" style="left:371px;top:152px;color:#ececec;font-size:12.5px;font-weight:normal;font-family:'Liberation Sans', sans-serif;">saleSystem</div>
<svg class="r" style="left:741px;top:156px;" width="6" height="4" viewBox="0 0 6 4"><path d="M0 0.3 H6 L3 3.8Z" fill="#d0d0d0"/></svg>
<svg class="r" style="left:757px;top:150px;" width="13" height="16" viewBox="0 0 13 16"><path d="M6.5 1 V14.5 M1.5 9.5 L6.5 14.5 L11.5 9.5" fill="none" stroke="#e0e0e0" stroke-width="1.2"/></svg>
<div class="t" style="left:774px;top:152px;color:#ececec;font-size:12.5px;font-weight:normal;font-family:'Liberation Sans', sans-serif;">UserDialog</div>
<svg class="r" style="left:1142px;top:156px;" width="6" height="4" viewBox="0 0 6 4"><path d="M0 0.3 H6 L3 3.8Z" fill="#d0d0d0"/></svg>
<svg class="r" style="left:1160px;top:150px;" width="14" height="15" viewBox="0 0 14 15"><g fill="none" stroke="#a07cd8" stroke-width="1.1"><path d="M7 1 L12.5 4 V10.5 L7 13.5 L1.5 10.5 V4Z M1.5 4 L7 7 L12.5 4 M7 7 V13.5"/></g></svg>
<div class="t" style="left:1177px;top:152px;color:#ececec;font-size:12.5px;font-weight:normal;font-family:'Liberation Sans', sans-serif;">OnBnClickedOk()</div>
<div class="r" style="left:1394px;top:124px;width:3px;height:21px;background:#2a2a2a;"></div>
<div class="r" style="left:343px;top:70px;width:7px;height:808px;background:#1a1a1a;"></div>
<div class="r" style="left:349px;top:147px;width:1px;height:682px;background:#3a3a3a;"></div>
<div class="r" style="left:350px;top:168px;width:17px;height:643px;background:#333333;"></div>
<div class="r" style="left:367px;top:168px;width:1030px;height:643px;background:#1e1e1e;"></div>
<div class="r" style="left:350px;top:168px;width:1047px;height:1px;background:#2e2e2e;"></div>
<div class="r" style="left:350px;top:168px;width:1047px;height:643px;overflow:hidden;">
<div class="r" style="left:99px;top:89px;width:442px;height:17px;background:#264f78;"></div>
<div class="r" style="left:99px;top:105px;width:43px;height:17px;background:#264f78;"></div>
<div class="r" style="left:99px;top:121px;width:302px;height:17px;background:#264f78;"></div>
<div class="r" style="left:99px;top:137px;width:113px;height:17px;background:#264f78;"></div>
<div class="r" style="left:99px;top:153px;width:43px;height:17px;background:#264f78;"></div>
<div class="r" style="left:99px;top:169px;width:8px;height:17px;background:#264f78;"></div>
<div class="r" style="left:99px;top:185px;width:911px;height:17px;background:#264f78;"></div>
<div class="r" style="left:99px;top:201px;width:43px;height:17px;background:#264f78;"></div>
<div class="r" style="left:99px;top:217px;width:288px;height:17px;background:#264f78;"></div>
<div class="r" style="left:99px;top:233px;width:113px;height:17px;background:#264f78;"></div>
<div class="r" style="left:99px;top:249px;width:43px;height:17px;background:#264f78;"></div>
<div class="r" style="left:99px;top:265px;width:8px;height:17px;background:#264f78;"></div>
<div class="r" style="left:99px;top:281px;width:295px;height:17px;background:#264f78;"></div>
<div class="r" style="left:99px;top:297px;width:435px;height:17px;background:#264f78;"></div>
<div class="r" style="left:99px;top:313px;width:491px;height:17px;background:#264f78;"></div>
<div class="r" style="left:99px;top:329px;width:8px;height:17px;background:#264f78;"></div>
<div class="r" style="left:99px;top:345px;width:281px;height:17px;background:#264f78;"></div>
<div class="r" style="left:99px;top:361px;width:43px;height:17px;background:#264f78;"></div>
<div class="r" style="left:99px;top:377px;width:330px;height:17px;background:#264f78;"></div>
<div class="r" style="left:99px;top:393px;width:113px;height:17px;background:#264f78;"></div>
<div class="r" style="left:99px;top:409px;width:43px;height:17px;background:#264f78;"></div>
<div class="r" style="left:99px;top:425px;width:8px;height:17px;background:#264f78;"></div>
<div class="r" style="left:99px;top:441px;width:351px;height:17px;background:#264f78;"></div>
<div class="r" style="left:99px;top:457px;width:365px;height:17px;background:#264f78;"></div>
<div class="r" style="left:99px;top:473px;width:428px;height:17px;background:#264f78;"></div>
<div class="r" style="left:99px;top:489px;width:8px;height:17px;background:#264f78;"></div>
<div class="r" style="left:99px;top:505px;width:246px;height:17px;background:#264f78;"></div>
<div class="r" style="left:99px;top:521px;width:43px;height:17px;background:#264f78;"></div>
<div class="r" style="left:99px;top:537px;width:246px;height:17px;background:#264f78;"></div>
<div class="r" style="left:99px;top:553px;width:113px;height:17px;background:#264f78;"></div>
<div class="r" style="left:99px;top:569px;width:43px;height:17px;background:#264f78;"></div>
<div class="r" style="left:99px;top:585px;width:8px;height:17px;background:#264f78;"></div>
<div class="r" style="left:99px;top:601px;width:253px;height:17px;background:#264f78;"></div>
<div class="r" style="left:99px;top:617px;width:43px;height:17px;background:#264f78;"></div>
<div class="r" style="left:99px;top:633px;width:302px;height:17px;background:#264f78;"></div>
<div class="r" style="left:73px;top:0px;width:5px;height:643px;background:#57a64a;"></div>
<div class="r" style="left:73px;top:58px;width:5px;height:112px;background:#1e1e1e;box-sizing:border-box;border:1px solid #e0b030;"></div>
<svg class="r" style="left:102px;top:57px;" width="1" height="592" viewBox="0 0 1 592"><path d="M0.5 0 V592" stroke="#707070" stroke-width="1" stroke-dasharray="4 2"/></svg>
<svg class="r" style="left:130px;top:121px;" width="1" height="32" viewBox="0 0 1 32"><path d="M0.5 0 V32" stroke="#707070" stroke-width="1" stroke-dasharray="4 2"/></svg>
<svg class="r" style="left:130px;top:217px;" width="1" height="32" viewBox="0 0 1 32"><path d="M0.5 0 V32" stroke="#707070" stroke-width="1" stroke-dasharray="4 2"/></svg>
<svg class="r" style="left:130px;top:377px;" width="1" height="32" viewBox="0 0 1 32"><path d="M0.5 0 V32" stroke="#707070" stroke-width="1" stroke-dasharray="4 2"/></svg>
<svg class="r" style="left:130px;top:537px;" width="1" height="32" viewBox="0 0 1 32"><path d="M0.5 0 V32" stroke="#707070" stroke-width="1" stroke-dasharray="4 2"/></svg>
<svg class="r" style="left:130px;top:633px;" width="1" height="16" viewBox="0 0 1 16"><path d="M0.5 0 V16" stroke="#707070" stroke-width="1" stroke-dasharray="4 2"/></svg>
<div class="r" style="left:84px;top:0px;width:1px;height:10px;background:#7a7a7a;"></div>
<div class="r" style="left:84px;top:9px;width:5px;height:1px;background:#7a7a7a;"></div>
<svg class="r" style="left:80px;top:31px;" width="10" height="6" viewBox="0 0 10 6"><path d="M0.5 0.5 L5 5 L9.5 0.5" fill="none" stroke="#c8c8c8" stroke-width="1.1"/></svg>
<div class="r" style="left:84px;top:41px;width:1px;height:52px;background:#7a7a7a;"></div>
<svg class="r" style="left:80px;top:95px;" width="10" height="6" viewBox="0 0 10 6"><path d="M0.5 0.5 L5 5 L9.5 0.5" fill="none" stroke="#c8c8c8" stroke-width="1.1"/></svg>
<div class="r" style="left:84px;top:105px;width:1px;height:84px;background:#7a7a7a;"></div>
<svg class="r" style="left:80px;top:191px;" width="10" height="6" viewBox="0 0 10 6"><path d="M0.5 0.5 L5 5 L9.5 0.5" fill="none" stroke="#c8c8c8" stroke-width="1.1"/></svg>
<div class="r" style="left:84px;top:201px;width:1px;height:148px;background:#7a7a7a;"></div>
<svg class="r" style="left:80px;top:351px;" width="10" height="6" viewBox="0 0 10 6"><path d="M0.5 0.5 L5 5 L9.5 0.5" fill="none" stroke="#c8c8c8" stroke-width="1.1"/></svg>
<div class="r" style="left:84px;top:361px;width:1px;height:148px;background:#7a7a7a;"></div>
<svg class="r" style="left:80px;top:511px;" width="10" height="6" viewBox="0 0 10 6"><path d="M0.5 0.5 L5 5 L9.5 0.5" fill="none" stroke="#c8c8c8" stroke-width="1.1"/></svg>
<div class="r" style="left:84px;top:521px;width:1px;height:84px;background:#7a7a7a;"></div>
<svg class="r" style="left:80px;top:607px;" width="10" height="6" viewBox="0 0 10 6"><path d="M0.5 0.5 L5 5 L9.5 0.5" fill="none" stroke="#c8c8c8" stroke-width="1.1"/></svg>
<div class="r" style="left:84px;top:617px;width:1px;height:26px;background:#7a7a7a;"></div>
<div class="r" style="left:84px;top:169px;width:5px;height:1px;background:#7a7a7a;"></div>
<div class="r" style="left:84px;top:265px;width:5px;height:1px;background:#7a7a7a;"></div>
<div class="r" style="left:84px;top:425px;width:5px;height:1px;background:#7a7a7a;"></div>
<div class="r" style="left:84px;top:585px;width:5px;height:1px;background:#7a7a7a;"></div>
<div class="code" style="left:38px;top:-7px;color:#8a8a8a">66</div>
<div class="code" style="left:38px;top:9px;color:#8a8a8a">67</div>
<div class="code" style="left:38px;top:25px;color:#8a8a8a">68</div>
<div class="code" style="left:38px;top:41px;color:#8a8a8a">69</div>
<div class="code" style="left:38px;top:57px;color:#8a8a8a">70</div>
<div class="code" style="left:38px;top:73px;color:#8a8a8a">71</div>
<div class="code" style="left:38px;top:89px;color:#e8e8e8">72</div>
<div class="code" style="left:38px;top:105px;color:#8a8a8a">73</div>
<div class="code" style="left:38px;top:121px;color:#8a8a8a">74</div>
<div class="code" style="left:38px;top:137px;color:#8a8a8a">75</div>
<div class="code" style="left:38px;top:153px;color:#8a8a8a">76</div>
<div class="code" style="left:38px;top:169px;color:#8a8a8a">77</div>
<div class="code" style="left:38px;top:185px;color:#8a8a8a">78</div>
<div class="code" style="left:38px;top:201px;color:#8a8a8a">79</div>
<div class="code" style="left:38px;top:217px;color:#8a8a8a">80</div>
<div class="code" style="left:38px;top:233px;color:#8a8a8a">81</div>
<div class="code" style="left:38px;top:249px;color:#8a8a8a">82</div>
<div class="code" style="left:38px;top:265px;color:#8a8a8a">83</div>
<div class="code" style="left:38px;top:281px;color:#8a8a8a">84</div>
<div class="code" style="left:38px;top:297px;color:#8a8a8a">85</div>
<div class="code" style="left:38px;top:313px;color:#8a8a8a">86</div>
<div class="code" style="left:38px;top:329px;color:#8a8a8a">87</div>
<div class="code" style="left:38px;top:345px;color:#8a8a8a">88</div>
<div class="code" style="left:38px;top:361px;color:#8a8a8a">89</div>
<div class="code" style="left:38px;top:377px;color:#8a8a8a">90</div>
<div class="code" style="left:38px;top:393px;color:#8a8a8a">91</div>
<div class="code" style="left:38px;top:409px;color:#8a8a8a">92</div>
<div class="code" style="left:38px;top:425px;color:#8a8a8a">93</div>
<div class="code" style="left:38px;top:441px;color:#8a8a8a">94</div>
<div class="code" style="left:38px;top:457px;color:#8a8a8a">95</div>
<div class="code" style="left:38px;top:473px;color:#8a8a8a">96</div>
<div class="code" style="left:38px;top:489px;color:#8a8a8a">97</div>
<div class="code" style="left:38px;top:505px;color:#8a8a8a">98</div>
<div class="code" style="left:38px;top:521px;color:#8a8a8a">99</div>
<div class="code" style="left:31px;top:537px;color:#8a8a8a">100</div>
<div class="code" style="left:31px;top:553px;color:#8a8a8a">101</div>
<div class="code" style="left:31px;top:569px;color:#8a8a8a">102</div>
<div class="code" style="left:31px;top:585px;color:#8a8a8a">103</div>
<div class="code" style="left:31px;top:601px;color:#8a8a8a">104</div>
<div class="code" style="left:31px;top:617px;color:#8a8a8a">105</div>
<div class="code" style="left:31px;top:633px;color:#8a8a8a">106</div>
<div class="code" style="left:99px;top:-7px;color:#b4b4b4">}</div>
<div class="code" style="left:99px;top:25px;color:#569cd6">void</div>
<div class="code" style="left:134px;top:25px;color:#4ec9b0">UserDialog</div>
<div class="code" style="left:204px;top:25px;color:#b4b4b4">::</div>
<div class="code" style="left:218px;top:25px;color:#dcdcaa">OnBnClickedOk</div>
<div class="code" style="left:309px;top:25px;color:#b4b4b4">()</div>
<div class="code" style="left:99px;top:41px;color:#b4b4b4">{</div>
<div class="code" style="left:127px;top:57px;color:#57a64a">// TODO: </div>
<div class="cjk" style="left:190px;top:57px;color:#57a64a">在</div>
<div class="cjk" style="left:204px;top:57px;color:#57a64a">此</div>
<div class="cjk" style="left:218px;top:57px;color:#57a64a">添</div>
<div class="cjk" style="left:232px;top:57px;color:#57a64a">加</div>
<div class="cjk" style="left:246px;top:57px;color:#57a64a">控</div>
<div class="cjk" style="left:260px;top:57px;color:#57a64a">件</div>
<div class="cjk" style="left:274px;top:57px;color:#57a64a">通</div>
<div class="cjk" style="left:288px;top:57px;color:#57a64a">知</div>
<div class="cjk" style="left:302px;top:57px;color:#57a64a">处</div>
<div class="cjk" style="left:316px;top:57px;color:#57a64a">理</div>
<div class="cjk" style="left:330px;top:57px;color:#57a64a">程</div>
<div class="cjk" style="left:344px;top:57px;color:#57a64a">序</div>
<div class="cjk" style="left:358px;top:57px;color:#57a64a">代</div>
<div class="cjk" style="left:372px;top:57px;color:#57a64a">码</div>
<div class="code" style="left:127px;top:89px;color:#d8a0df">if</div>
<div class="code" style="left:141px;top:89px;color:#b4b4b4"> (</div>
<div class="code" style="left:155px;top:89px;color:#569cd6">this</div>
<div class="code" style="left:183px;top:89px;color:#b4b4b4">-&gt;</div>
<div class="code" style="left:197px;top:89px;color:#dadada">usernameEditControl</div>
<div class="code" style="left:330px;top:89px;color:#b4b4b4">.</div>
<div class="code" style="left:337px;top:89px;color:#dcdcaa">GetWindowTextLengthW</div>
<div class="code" style="left:477px;top:89px;color:#b4b4b4">() == </div>
<div class="code" style="left:519px;top:89px;color:#b5cea8">0</div>
<div class="code" style="left:526px;top:89px;color:#b4b4b4">)</div>
<div class="code" style="left:127px;top:105px;color:#b4b4b4">{</div>
<div class="code" style="left:155px;top:121px;color:#beb7ff">MessageBox</div>
<div class="code" style="left:225px;top:121px;color:#b4b4b4">(</div>
<div class="code" style="left:232px;top:121px;color:#d69d85">L&quot;</div>
<div class="cjk" style="left:246px;top:121px;color:#d69d85">输</div>
<div class="cjk" style="left:260px;top:121px;color:#d69d85">入</div>
<div class="cjk" style="left:274px;top:121px;color:#d69d85">用</div>
<div class="cjk" style="left:288px;top:121px;color:#d69d85">户</div>
<div class="cjk" style="left:302px;top:121px;color:#d69d85">名</div>
<div class="cjk" style="left:316px;top:121px;color:#d69d85">不</div>
<div class="cjk" style="left:330px;top:121px;color:#d69d85">能</div>
<div class="cjk" style="left:344px;top:121px;color:#d69d85">为</div>
<div class="cjk" style="left:358px;top:121px;color:#d69d85">空</div>
<div class="code" style="left:372px;top:121px;color:#d69d85">&quot;</div>
<div class="code" style="left:379px;top:121px;color:#b4b4b4">);</div>
<div class="code" style="left:155px;top:137px;color:#d8a0df">return</div>
<div class="code" style="left:197px;top:137px;color:#b4b4b4">;</div>
<div class="code" style="left:127px;top:153px;color:#b4b4b4">}</div>
<div class="code" style="left:127px;top:185px;color:#d8a0df">if</div>
<div class="code" style="left:141px;top:185px;color:#b4b4b4"> (</div>
<div class="code" style="left:155px;top:185px;color:#569cd6">this</div>
<div class="code" style="left:183px;top:185px;color:#b4b4b4">-&gt;</div>
<div class="code" style="left:197px;top:185px;color:#dadada">newPasswordEditControl</div>
<div class="code" style="left:351px;top:185px;color:#b4b4b4">.</div>
<div class="code" style="left:358px;top:185px;color:#dcdcaa">GetWindowTextLengthW</div>
<div class="code" style="left:498px;top:185px;color:#b4b4b4">() == </div>
<div class="code" style="left:540px;top:185px;color:#b5cea8">0</div>
<div class="code" style="left:547px;top:185px;color:#b4b4b4"> || </div>
<div class="code" style="left:575px;top:185px;color:#569cd6">this</div>
<div class="code" style="left:603px;top:185px;color:#b4b4b4">-&gt;</div>
<div class="code" style="left:617px;top:185px;color:#dadada">confirmPasswordEditControl</div>
<div class="code" style="left:799px;top:185px;color:#b4b4b4">.</div>
<div class="code" style="left:806px;top:185px;color:#dcdcaa">GetWindowTextLengthW</div>
<div class="code" style="left:946px;top:185px;color:#b4b4b4">() == </div>
<div class="code" style="left:988px;top:185px;color:#b5cea8">0</div>
<div class="code" style="left:995px;top:185px;color:#b4b4b4">)</div>
<div class="code" style="left:127px;top:201px;color:#b4b4b4">{</div>
<div class="code" style="left:155px;top:217px;color:#beb7ff">MessageBox</div>
<div class="code" style="left:225px;top:217px;color:#b4b4b4">(</div>
<div class="code" style="left:232px;top:217px;color:#d69d85">L&quot;</div>
<div class="cjk" style="left:246px;top:217px;color:#d69d85">输</div>
<div class="cjk" style="left:260px;top:217px;color:#d69d85">入</div>
<div class="cjk" style="left:274px;top:217px;color:#d69d85">密</div>
<div class="cjk" style="left:288px;top:217px;color:#d69d85">码</div>
<div class="cjk" style="left:302px;top:217px;color:#d69d85">不</div>
<div class="cjk" style="left:316px;top:217px;color:#d69d85">能</div>
<div class="cjk" style="left:330px;top:217px;color:#d69d85">为</div>
<div class="cjk" style="left:344px;top:217px;color:#d69d85">空</div>
<div class="code" style="left:358px;top:217px;color:#d69d85">&quot;</div>
<div class="code" style="left:365px;top:217px;color:#b4b4b4">);</div>
<div class="code" style="left:155px;top:233px;color:#d8a0df">return</div>
<div class="code" style="left:197px;top:233px;color:#b4b4b4">;</div>
<div class="code" style="left:127px;top:249px;color:#b4b4b4">}</div>
<div class="code" style="left:127px;top:281px;color:#4ec9b0">CString</div>
<div class="code" style="left:183px;top:281px;color:#9cdcfe">newPassword</div>
<div class="code" style="left:260px;top:281px;color:#b4b4b4">, </div>
<div class="code" style="left:274px;top:281px;color:#9cdcfe">confirmPassword</div>
<div class="code" style="left:379px;top:281px;color:#b4b4b4">;</div>
<div class="code" style="left:127px;top:297px;color:#569cd6">this</div>
<div class="code" style="left:155px;top:297px;color:#b4b4b4">-&gt;</div>
<div class="code" style="left:169px;top:297px;color:#dadada">newPasswordEditControl</div>
<div class="code" style="left:323px;top:297px;color:#b4b4b4">.</div>
<div class="code" style="left:330px;top:297px;color:#dcdcaa">GetWindowTextW</div>
<div class="code" style="left:428px;top:297px;color:#b4b4b4">(</div>
<div class="code" style="left:435px;top:297px;color:#9cdcfe">newPassword</div>
<div class="code" style="left:512px;top:297px;color:#b4b4b4">);</div>
<div class="code" style="left:127px;top:313px;color:#569cd6">this</div>
<div class="code" style="left:155px;top:313px;color:#b4b4b4">-&gt;</div>
<div class="code" style="left:169px;top:313px;color:#dadada">confirmPasswordEditControl</div>
<div class="code" style="left:351px;top:313px;color:#b4b4b4">.</div>
<div class="code" style="left:358px;top:313px;color:#dcdcaa">GetWindowTextW</div>
<div class="code" style="left:456px;top:313px;color:#b4b4b4">(</div>
<div class="code" style="left:463px;top:313px;color:#9cdcfe">confirmPassword</div>
<div class="code" style="left:568px;top:313px;color:#b4b4b4">);</div>
<div class="code" style="left:127px;top:345px;color:#d8a0df">if</div>
<div class="code" style="left:141px;top:345px;color:#b4b4b4"> (</div>
<div class="code" style="left:155px;top:345px;color:#9cdcfe">newPassword</div>
<div class="code" style="left:232px;top:345px;color:#b4b4b4"> != </div>
<div class="code" style="left:260px;top:345px;color:#9cdcfe">confirmPassword</div>
<div class="code" style="left:365px;top:345px;color:#b4b4b4">)</div>
<div class="code" style="left:127px;top:361px;color:#b4b4b4">{</div>
<div class="code" style="left:155px;top:377px;color:#beb7ff">MessageBox</div>
<div class="code" style="left:225px;top:377px;color:#b4b4b4">(</div>
<div class="code" style="left:232px;top:377px;color:#d69d85">L&quot;</div>
<div class="cjk" style="left:246px;top:377px;color:#d69d85">输</div>
<div class="cjk" style="left:260px;top:377px;color:#d69d85">入</div>
<div class="cjk" style="left:274px;top:377px;color:#d69d85">密</div>
<div class="cjk" style="left:288px;top:377px;color:#d69d85">码</div>
<div class="cjk" style="left:302px;top:377px;color:#d69d85">和</div>
<div class="cjk" style="left:316px;top:377px;color:#d69d85">确</div>
<div class="cjk" style="left:330px;top:377px;color:#d69d85">定</div>
<div class="cjk" style="left:344px;top:377px;color:#d69d85">密</div>
<div class="cjk" style="left:358px;top:377px;color:#d69d85">码</div>
<div class="cjk" style="left:372px;top:377px;color:#d69d85">不</div>
<div class="cjk" style="left:386px;top:377px;color:#d69d85">同</div>
<div class="code" style="left:400px;top:377px;color:#d69d85">&quot;</div>
<div class="code" style="left:407px;top:377px;color:#b4b4b4">);</div>
<div class="code" style="left:155px;top:393px;color:#d8a0df">return</div>
<div class="code" style="left:197px;top:393px;color:#b4b4b4">;</div>
<div class="code" style="left:127px;top:409px;color:#b4b4b4">}</div>
<div class="code" style="left:127px;top:441px;color:#4ec9b0">CString</div>
<div class="code" style="left:183px;top:441px;color:#9cdcfe">oldPassword</div>
<div class="code" style="left:260px;top:441px;color:#b4b4b4">, </div>
<div class="code" style="left:274px;top:441px;color:#9cdcfe">username</div>
<div class="code" style="left:330px;top:441px;color:#b4b4b4">, </div>
<div class="code" style="left:344px;top:441px;color:#9cdcfe">inputUsername</div>
<div class="code" style="left:435px;top:441px;color:#b4b4b4">;</div>
<div class="code" style="left:127px;top:457px;color:#4ec9b0">StoreManager</div>
<div class="code" style="left:211px;top:457px;color:#b4b4b4">::</div>
<div class="code" style="left:225px;top:457px;color:#dcdcaa">readLogin</div>
<div class="code" style="left:288px;top:457px;color:#b4b4b4">(</div>
<div class="code" style="left:295px;top:457px;color:#9cdcfe">username</div>
<div class="code" style="left:351px;top:457px;color:#b4b4b4">, </div>
<div class="code" style="left:365px;top:457px;color:#9cdcfe">oldPassword</div>
<div class="code" style="left:442px;top:457px;color:#b4b4b4">);</div>
<div class="code" style="left:127px;top:473px;color:#569cd6">this</div>
<div class="code" style="left:155px;top:473px;color:#b4b4b4">-&gt;</div>
<div class="code" style="left:169px;top:473px;color:#dadada">usernameEditControl</div>
<div class="code" style="left:302px;top:473px;color:#b4b4b4">.</div>
<div class="code" style="left:309px;top:473px;color:#dcdcaa">GetWindowTextW</div>
<div class="code" style="left:407px;top:473px;color:#b4b4b4">(</div>
<div class="code" style="left:414px;top:473px;color:#9cdcfe">inputUsername</div>
<div class="code" style="left:505px;top:473px;color:#b4b4b4">);</div>
<div class="code" style="left:127px;top:505px;color:#d8a0df">if</div>
<div class="code" style="left:141px;top:505px;color:#b4b4b4"> (</div>
<div class="code" style="left:155px;top:505px;color:#9cdcfe">inputUsername</div>
<div class="code" style="left:246px;top:505px;color:#b4b4b4"> != </div>
<div class="code" style="left:274px;top:505px;color:#9cdcfe">username</div>
<div class="code" style="left:330px;top:505px;color:#b4b4b4">)</div>
<div class="code" style="left:127px;top:521px;color:#b4b4b4">{</div>
<div class="code" style="left:155px;top:537px;color:#beb7ff">MessageBox</div>
<div class="code" style="left:225px;top:537px;color:#b4b4b4">(</div>
<div class="code" style="left:232px;top:537px;color:#d69d85">L&quot;</div>
<div class="cjk" style="left:246px;top:537px;color:#d69d85">用</div>
<div class="cjk" style="left:260px;top:537px;color:#d69d85">户</div>
<div class="cjk" style="left:274px;top:537px;color:#d69d85">名</div>
<div class="cjk" style="left:288px;top:537px;color:#d69d85">错</div>
<div class="cjk" style="left:302px;top:537px;color:#d69d85">误</div>
<div class="code" style="left:316px;top:537px;color:#d69d85">&quot;</div>
<div class="code" style="left:323px;top:537px;color:#b4b4b4">);</div>
<div class="code" style="left:155px;top:553px;color:#d8a0df">return</div>
<div class="code" style="left:197px;top:553px;color:#b4b4b4">;</div>
<div class="code" style="left:127px;top:569px;color:#b4b4b4">}</div>
<div class="code" style="left:127px;top:601px;color:#d8a0df">if</div>
<div class="code" style="left:155px;top:601px;color:#9cdcfe">newPassword</div>
<div class="code" style="left:232px;top:601px;color:#b4b4b4"> == </div>
<div class="code" style="left:260px;top:601px;color:#9cdcfe">oldPassword</div>
<div class="code" style="left:337px;top:601px;color:#b4b4b4">)</div>
<div class="code" style="left:127px;top:617px;color:#b4b4b4">{</div>
<div class="code" style="left:155px;top:633px;color:#beb7ff">MessageBox</div>
<div class="code" style="left:225px;top:633px;color:#b4b4b4">(</div>
<div class="code" style="left:232px;top:633px;color:#d69d85">L&quot;</div>
<div class="cjk" style="left:246px;top:633px;color:#d69d85">新</div>
<div class="cjk" style="left:260px;top:633px;color:#d69d85">密</div>
<div class="cjk" style="left:274px;top:633px;color:#d69d85">码</div>
<div class="cjk" style="left:288px;top:633px;color:#d69d85">和</div>
<div class="cjk" style="left:302px;top:633px;color:#d69d85">原</div>
<div class="cjk" style="left:316px;top:633px;color:#d69d85">密</div>
<div class="cjk" style="left:330px;top:633px;color:#d69d85">码</div>
<div class="cjk" style="left:344px;top:633px;color:#d69d85">相</div>
<div class="cjk" style="left:358px;top:633px;color:#d69d85">同</div>
<div class="code" style="left:372px;top:633px;color:#d69d85">&quot;</div>
<div class="code" style="left:379px;top:633px;color:#b4b4b4">);</div>
<div class="r" style="left:144px;top:603px;width:12px;height:12px;background:#0000e6;box-sizing:border-box;border:3px solid #e4e4e4;border-right-color:#9a9a9a;border-bottom-color:#9a9a9a;"></div>
</div>
<div class="r" style="left:349px;top:811px;width:1048px;height:18px;background:#2b2b2b;"></div>
<div class="r" style="left:349px;top:811px;width:61px;height:18px;background:#333333;"></div>
<div class="t" style="left:352px;top:814px;color:#e8e8e8;font-size:11.2px;font-weight:normal;font-family:'Liberation Sans', sans-serif;">100 %</div>
<svg class="r" style="left:401px;top:818px;" width="6" height="4" viewBox="0 0 6 4"><path d="M0 0.3 H6 L3 3.8Z" fill="#d0d0d0"/></svg>
<svg class="r" style="left:434px;top:814px;" width="12" height="12" viewBox="0 0 12 12"><circle cx="6" cy="6" r="5.5" fill="#6cc070"/><path d="M3.3 6 L5.2 7.9 L8.7 4.4" fill="none" stroke="#1f1f1f" stroke-width="1.4"/></svg>
<div style="position:absolute;left:450px;top:815px;font-size:11px;line-height:1;color:#e8e8e8;font-family:'Liberation Sans',sans-serif;white-space:pre">未找到相关问题</div>
<div class="r" style="left:594px;top:814px;width:1px;height:13px;background:#9a9a9a;"></div>
<svg class="r" style="left:607px;top:812px;" width="15" height="15" viewBox="0 0 15 15"><path d="M8 7 L13 2" stroke="#c0c0c0" stroke-width="1.5"/><path d="M2 9 L7 5 L10 8 L6 14Z" fill="#c8a872"/><path d="M2 2 L3 4 M5 1 V3 M1 6 H3" stroke="#3f9ee8"/></svg>
<svg class="r" style="left:627px;top:818px;" width="6" height="4" viewBox="0 0 6 4"><path d="M0 0.3 H6 L3 3.8Z" fill="#d0d0d0"/></svg>
<svg class="r" style="left:664px;top:815px;" width="5" height="9" viewBox="0 0 5 9"><path d="M5 0 L0 4.5 L5 9Z" fill="#9a9a9a"/></svg>
<div class="r" style="left:674px;top:815px;width:669px;height:10px;background:#4d4d4d;"></div>
<svg class="r" style="left:1352px;top:816px;" width="5" height="9" viewBox="0 0 5 9"><path d="M0 0 L5 4.5 L0 9Z" fill="#9a9a9a"/></svg>
<div class="r" style="left:349px;top:828px;width:1048px;height:1px;background:#383838;"></div>
<div class="t" style="left:1385px;top:815px;color:#e8e8e8;font-size:12.5px;font-weight:normal;font-family:'Liberation Sans', sans-serif;"><span style="font-size:12px;letter-spacing:0">行</span></div>
<div class="r" style="left:349px;top:836px;width:1048px;height:42px;background:#1f1f1f;box-sizing:border-box;border:1px solid #3d3d3d;border-bottom:none;border-right:none;"></div>
<div class="t" style="left:354px;top:843px;color:#d8d8d8;font-size:12.5px;font-weight:normal;font-family:'Liberation Sans', sans-serif;"><span style="font-size:12px;letter-spacing:0">输出</span></div>
<div class="t" style="left:357px;top:866px;color:#e8e8e8;font-size:12.5px;font-weight:normal;font-family:'Liberation Sans', sans-serif;"><span style="font-size:12px;letter-spacing:0">显示输出来源</span>(S):</div>
<div class="r" style="left:453px;top:863px;width:230px;height:15px;background:#393939;box-sizing:border-box;border:1px solid #474747;border-bottom:none;"></div>
<div class="t" style="left:457px;top:866px;color:#e8e8e8;font-size:12.5px;font-weight:normal;font-family:'Liberation Sans', sans-serif;"><span style="font-size:12px;letter-spacing:0">调试</span></div>
<svg class="r" style="left:673px;top:872px;" width="6" height="4" viewBox="0 0 6 4"><path d="M0 0.3 H6 L3 3.8Z" fill="#d0d0d0"/></svg>
<div class="r" style="left:689px;top:864px;width:1px;height:14px;background:#3a3a3a;"></div>
<div class="r" style="left:719px;top:864px;width:1px;height:14px;background:#3a3a3a;"></div>
<div class="r" style="left:772px;top:864px;width:1px;height:14px;background:#3a3a3a;"></div>
<div class="r" style="left:802px;top:864px;width:1px;height:14px;background:#3a3a3a;"></div>
<div class="r" style="left:831px;top:864px;width:1px;height:14px;background:#3a3a3a;"></div>
<svg class="r" style="left:697px;top:865px;" width="16" height="13" viewBox="0 0 16 13"><path d="M4.5 1 Q2.5 1 2.5 3.5 V8 M0.5 6 L2.5 8 L4.5 6" fill="none" stroke="#4a4a4a"/><path d="M2 8.5 H14" stroke="#4a4a4a"/><rect x="1" y="10" width="9" height="3" fill="#4a4a4a"/></svg>
<svg class="r" style="left:726px;top:865px;" width="16" height="13" viewBox="0 0 16 13"><path d="M4.5 2 L1.5 4.5 L4.5 7 M1.5 4.5 H9.5" fill="none" stroke="#4aa8f0" stroke-width="1.2"/><path d="M4 9.5 H15" stroke="#e0e0e0"/><rect x="4" y="11" width="11" height="2" fill="#e0e0e0"/></svg>
<svg class="r" style="left:747px;top:865px;" width="16" height="13" viewBox="0 0 16 13"><path d="M6.5 2 L9.5 4.5 L6.5 7 M1.5 4.5 H9.5" fill="none" stroke="#4aa8f0" stroke-width="1.2"/><path d="M4 9.5 H15" stroke="#e0e0e0"/><rect x="4" y="11" width="11" height="2" fill="#e0e0e0"/></svg>
<svg class="r" style="left:779px;top:865px;" width="16" height="13" viewBox="0 0 16 13"><path d="M1 1 L6 6 M6 1 L1 6" stroke="#e04858" stroke-width="1.3"/><path d="M7 1.5 H15 M7 4.5 H15 M7 7.5 H15 M1 10.5 H15" stroke="#e0e0e0"/></svg>
<svg class="r" style="left:809px;top:864px;" width="16" height="14" viewBox="0 0 16 14"><text x="0" y="7" font-family="Liberation Sans" font-size="8" fill="#e0e0e0">ab</text><text x="0" y="14" font-family="Liberation Sans" font-size="8" fill="#e0e0e0">c</text><path d="M14.5 5 V10.5 H7 M9 8.5 L7 10.5 L9 12.5" fill="none" stroke="#4aa8f0" stroke-width="1.1"/></svg>
<svg class="r" style="left:839px;top:865px;" width="16" height="13" viewBox="0 0 16 13"><circle cx="8" cy="7.5" r="6.5" fill="none" stroke="#e0e0e0" stroke-width="1.1"/><path d="M7.5 3.5 V8 H11" fill="none" stroke="#e0e0e0" stroke-width="1.1"/></svg></body></html>
